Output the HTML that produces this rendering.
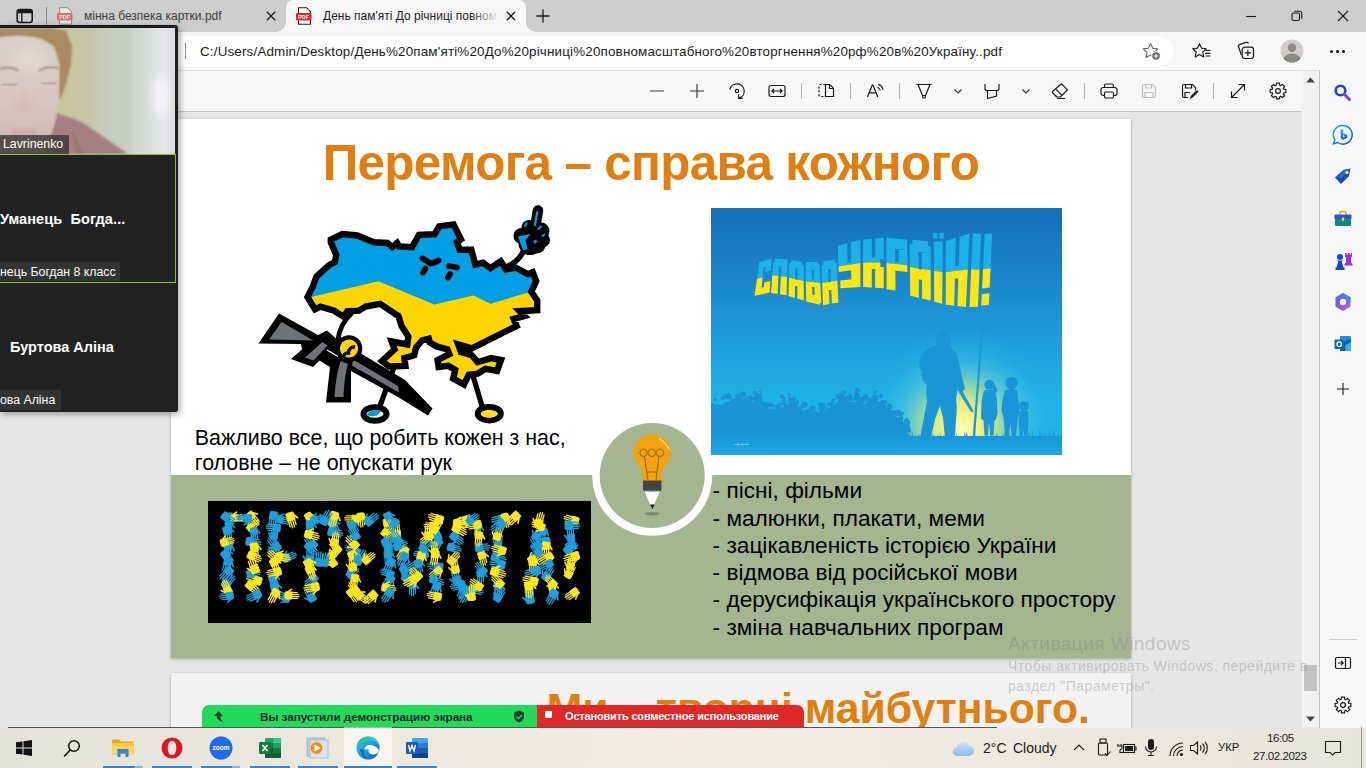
<!DOCTYPE html>
<html><head><meta charset="utf-8">
<style>
*{box-sizing:border-box;margin:0;padding:0}
html,body{width:1366px;height:768px;overflow:hidden;background:#e6e6e6;font-family:"Liberation Sans",sans-serif;}
.abs{position:absolute}
#tabbar{left:0;top:0;width:1366px;height:32px;background:#cdcdcd}
#tab2{left:286px;top:0;width:240px;height:32px;background:#f7f7f7;border-radius:7px 7px 0 0}
.tabtxt{font-size:12px;color:#3b3b3b;top:9px;white-space:nowrap}
#addr{left:0;top:32px;width:1366px;height:38px;background:#f7f7f7}
#pill{left:150px;top:36px;width:1024px;height:30px;background:#fff;border-radius:15px}
#url{left:200px;top:43.600px;font-size:13.4px;color:#1b1b1b;white-space:nowrap;letter-spacing:0.177px}
#ptool{left:0;top:70px;width:1319px;height:42px;background:#f7f7f7;border-bottom:1px solid #c4c4c4;border-top:1px solid #dcdcdc}
#side{left:1319px;top:70px;width:47px;height:658px;background:#f7f7f7;border-left:1px solid #c0c0c0}
#pdfbg{left:0;top:112px;width:1303px;height:615px;background:#e6e6e6}
#vscroll{left:1302px;top:71px;width:17px;height:656px;background:#f1f1f1}
#page{left:171px;top:119px;width:960px;height:539px;background:#fff;box-shadow:0 1px 3px rgba(0,0,0,.3)}
#band{left:171px;top:475px;width:960px;height:183px;background:#a5b592}
#page2{left:171px;top:673px;width:960px;height:60px;background:#f2f2f2;box-shadow:0 1px 3px rgba(0,0,0,.3)}
#title{left:171px;top:134.300px;width:960px;text-align:center;font-size:49.4px;letter-spacing:-0.68px;font-weight:bold;color:#e07f10;white-space:nowrap}
.st{font-size:21.4px;color:#000;white-space:nowrap;line-height:1}
.bl{font-size:22.65px;color:#000;white-space:nowrap;line-height:1}
#taskbar{left:0;top:728px;width:1366px;height:40px;border-top:0;background:linear-gradient(90deg,#e4e3da 0%,#ece9e0 30%,#f1ece1 55%,#ece9df 75%,#e6e5dc 100%)}
.wm{color:rgba(128,128,128,.36);white-space:nowrap;line-height:1;letter-spacing:.47px}
.tray{color:#1a1a1a;white-space:nowrap}
#page2title{left:546.800px;top:686.600px;line-height:1;font-size:42.7px;font-weight:bold;color:#e07f10;white-space:nowrap}
#zoom{left:0;top:25px;width:178px;height:387px;background:#222;border-radius:0 3px 3px 0;box-shadow:2px 2px 6px rgba(0,0,0,.35);border-top:3px solid #1a1a1a;border-right:2px solid #1e1e1e}
.zl{color:#fff;font-size:12.3px;white-space:nowrap}
.zn{color:#fff;font-size:14.500px;font-weight:bold;white-space:nowrap}
</style></head><body>
<div id="tabbar" class="abs"></div>
<div id="tab2" class="abs"></div>
<div class="abs" style="left:276px;top:22px;width:10px;height:10px;background:radial-gradient(circle at 0 0,#cdcdcd 9.5px,#f7f7f7 10px)"></div>
<div class="abs" style="left:526px;top:22px;width:10px;height:10px;background:radial-gradient(circle at 100% 0,#cdcdcd 9.5px,#f7f7f7 10px)"></div>
<!-- tab actions icon -->
<svg class="abs" style="left:16px;top:8px" width="18" height="16" viewBox="0 0 18 16"><rect x="1.2" y="1.5" width="15" height="13" rx="2.5" fill="none" stroke="#1a1a1a" stroke-width="1.6"/><path d="M1.2 5.2V4a2.5 2.5 0 0 1 2.5-2.5h10a2.5 2.5 0 0 1 2.500 2.500V5.200Z" fill="#1a1a1a"/><path d="M5.800 5v9.500" stroke="#1a1a1a" stroke-width="1.400"/></svg>
<div class="abs" style="left:46px;top:7px;width:1px;height:18px;background:#8a8a8a"></div>
<!-- pdf icon 1 (faded) -->
<svg class="abs" style="left:57px;top:7px;opacity:.55" width="17" height="18" viewBox="0 0 17 18"><path d="M2.500 .7h8l4 4v12.500h-12z" fill="#fff" stroke="#555" stroke-width="1"/><rect x="0" y="6" width="15.500" height="7.500" rx="1" fill="#e5252a"/><text x="7.700" y="12" font-size="5.500" font-weight="bold" fill="#fff" text-anchor="middle" font-family="Liberation Sans">PDF</text></svg>
<div class="abs tabtxt" style="left:84px">мінна безпека картки.pdf</div>
<svg class="abs" style="left:266px;top:11px" width="10" height="10" viewBox="0 0 10 10"><path d="M.8.800l8.400 8.400M9.200.800L.8 9.200" stroke="#1a1a1a" stroke-width="1.300"/></svg>
<!-- pdf icon 2 -->
<svg class="abs" style="left:296px;top:7px" width="17" height="18" viewBox="0 0 17 18"><path d="M2.500 .7h8l4 4v12.500h-12z" fill="#fff" stroke="#222" stroke-width="1.100"/><rect x="0" y="6" width="15.500" height="7.500" rx="1" fill="#e5252a"/><text x="7.700" y="12" font-size="5.500" font-weight="bold" fill="#fff" text-anchor="middle" font-family="Liberation Sans">PDF</text></svg>
<div class="abs tabtxt" id="t2txt" style="left:323px;color:#1b1b1b;width:176px;overflow:hidden">День пам'яті До річниці повном</div>
<div class="abs" style="left:470px;top:4px;width:29px;height:24px;background:linear-gradient(90deg,rgba(247,247,247,0),#f7f7f7)"></div>
<svg class="abs" style="left:506px;top:11px" width="10" height="10" viewBox="0 0 10 10"><path d="M.8.800l8.400 8.400M9.200.800L.8 9.200" stroke="#1a1a1a" stroke-width="1.300"/></svg>
<svg class="abs" style="left:536px;top:9px" width="14" height="14" viewBox="0 0 14 14"><path d="M7 .5v13M.5 7h13" stroke="#1a1a1a" stroke-width="1.300"/></svg>
<!-- window controls -->
<svg class="abs" style="left:1245px;top:11px" width="12" height="12" viewBox="0 0 12 12"><path d="M1 5.500h10" stroke="#1a1a1a" stroke-width="1.100"/></svg>
<svg class="abs" style="left:1291px;top:10px" width="12" height="12" viewBox="0 0 12 12"><rect x="1" y="3" width="7.500" height="7.500" rx="1.500" fill="none" stroke="#1a1a1a" stroke-width="1.100"/><path d="M3.200 1.200h5.300a2.300 2.300 0 0 1 2.300 2.300v5.300" fill="none" stroke="#1a1a1a" stroke-width="1.100"/></svg>
<svg class="abs" style="left:1337px;top:10px" width="12" height="12" viewBox="0 0 12 12"><path d="M1 1l10 10M11 1L1 11" stroke="#1a1a1a" stroke-width="1.100"/></svg>
<div id="addr" class="abs"></div>
<div id="pill" class="abs"></div>
<div class="abs" style="left:185px;top:43px;width:1px;height:16px;background:#8a8a8a"></div>
<div id="url" class="abs">C:/Users/Admin/Desktop/День%20пам'яті%20До%20річниці%20повномасштабного%20вторгнення%20рф%20в%20Україну..pdf</div>
<!-- star plus -->
<svg class="abs" style="left:1141px;top:41px" width="22" height="22" viewBox="0 0 22 22"><path d="M9.500 2.500l2.200 4.700 5 .7-3.700 3.500.9 5.100-4.400-2.500-4.500 2.500.9-5.100L2.200 7.900l5.100-.7z" fill="none" stroke="#666" stroke-width="1.100" stroke-linejoin="round"/><circle cx="15" cy="15" r="4.300" fill="#666" stroke="#fff" stroke-width="1"/><path d="M15 12.800v4.400M12.800 15h4.400" stroke="#fff" stroke-width="1.100"/></svg>
<!-- favorites -->
<svg class="abs" style="left:1191px;top:41px" width="22" height="22" viewBox="0 0 22 22"><path d="M8.500 2.700l2.100 4.500 4.600.6-3.400 3.300.9 4.900-4.200-2.400-4.300 2.400.9-4.900L1.700 7.800l4.700-.6z" fill="none" stroke="#1a1a1a" stroke-width="1.200" stroke-linejoin="round"/><path d="M14.500 9.500h5M14 12.300h5.500M14.500 15h5" stroke="#1a1a1a" stroke-width="1.200"/></svg>
<!-- collections -->
<svg class="abs" style="left:1235px;top:40px" width="22" height="22" viewBox="0 0 22 22"><path d="M6.500 15.200l-2.800-8a2.200 2.200 0 0 1 1.300-2.800l6-2a2.200 2.200 0 0 1 2.500 1" fill="none" stroke="#1a1a1a" stroke-width="1.200"/><rect x="7.200" y="7.200" width="11.300" height="11.300" rx="2.500" fill="#f7f7f7" stroke="#1a1a1a" stroke-width="1.200"/><path d="M12.850 9.800v6.100M9.800 12.850h6.100" stroke="#1a1a1a" stroke-width="1.200"/></svg>
<!-- avatar -->
<svg class="abs" style="left:1280px;top:39px" width="24" height="24" viewBox="0 0 24 24"><defs><clipPath id="avc"><circle cx="12" cy="12" r="11.500"/></clipPath></defs><circle cx="12" cy="12" r="11.500" fill="#d0cdcb"/><g clip-path="url(#avc)" fill="#8c8886"><circle cx="12" cy="8.700" r="4.200"/><ellipse cx="12" cy="20.500" rx="8.500" ry="6"/></g></svg>
<div class="abs" style="left:1330px;top:49.500px;width:3px;height:3px;border-radius:2px;background:#1a1a1a;box-shadow:6px 0 0 #1a1a1a,12px 0 0 #1a1a1a"></div>
<div id="ptool" class="abs"></div>
<svg class="abs" style="left:646.0px;top:80.0px" width="22" height="22" viewBox="0 0 22 22"><path d="M4 11h14" stroke="#555" stroke-width="1.1"/></svg>
<svg class="abs" style="left:686.0px;top:80.0px" width="22" height="22" viewBox="0 0 22 22"><path d="M4 11h14M11 4v14" stroke="#333" stroke-width="1.1"/></svg>
<svg class="abs" style="left:726.0px;top:80.0px" width="22" height="22" viewBox="0 0 22 22"><path d="M3.800 9.500a7.300 7.300 0 1 1 9.200 8.600" stroke="#1a1a1a" stroke-width="1.2" fill="none"/><path d="M12.700 14.300v4h4" stroke="#1a1a1a" stroke-width="1.2" fill="none"/><circle cx="11" cy="11" r="1.700" stroke="#1a1a1a" stroke-width="1.2" fill="none"/></svg>
<svg class="abs" style="left:766.0px;top:80.0px" width="22" height="22" viewBox="0 0 22 22"><rect x="3" y="5.500" width="16" height="11" rx="2" stroke="#1a1a1a" stroke-width="1.2" fill="none"/><path d="M6 11h10M8 9l-2 2 2 2M14 9l2 2-2 2" stroke="#1a1a1a" stroke-width="1.2" fill="none"/></svg>
<div class="abs" style="left:801px;top:83px;width:1px;height:16px;background:#b5b5b5"></div>
<svg class="abs" style="left:815.0px;top:80.0px" width="22" height="22" viewBox="0 0 22 22"><path d="M10.500 4.500h4.300l3.700 3.700v8.300h-8z" stroke="#1a1a1a" stroke-width="1.2" fill="none"/><path d="M14.500 4.700v3.800h3.800" stroke="#1a1a1a" stroke-width="1.2" fill="none"/><path d="M10.500 4.500H5.500a1.500 1.500 0 0 0-1.500 1.500v9a1.500 1.500 0 0 0 1.500 1.500h5" stroke="#1a1a1a" stroke-width="1.2" fill="none" stroke-dasharray="2.2 1.600"/></svg>
<div class="abs" style="left:850px;top:83px;width:1px;height:16px;background:#b5b5b5"></div>
<svg class="abs" style="left:864.0px;top:80.0px" width="22" height="22" viewBox="0 0 22 22"><path d="M3.500 17l4.700-12h.8l4.700 12M5.300 12.800h6.600" stroke="#1a1a1a" stroke-width="1.2" fill="none"/><path d="M13.500 7.200a4 4 0 0 1 2.800 3.300M14.200 4.300a6.800 6.800 0 0 1 4.800 5.500" stroke="#1a1a1a" stroke-width="1.2" fill="none"/></svg>
<div class="abs" style="left:899px;top:83px;width:1px;height:16px;background:#b5b5b5"></div>
<svg class="abs" style="left:913.0px;top:80.0px" width="22" height="22" viewBox="0 0 22 22"><path d="M3.500 4.500h15M5 4.500l4.500 11h3l4.500-11M9.500 15.500l.5 2.500h2l.5-2.500" stroke="#1a1a1a" stroke-width="1.2" fill="none"/></svg>
<svg class="abs" style="left:947.0px;top:80.0px" width="22" height="22" viewBox="0 0 22 22"><path d="M7.500 9.500l3.500 3.500 3.500-3.500" stroke="#333" stroke-width="1.100" fill="none"/></svg>
<svg class="abs" style="left:981.0px;top:80.0px" width="22" height="22" viewBox="0 0 22 22"><path d="M4 4v4.500a2 2 0 0 0 2 2h10a2 2 0 0 0 2-2V4M6.500 10.500v8l9-2.500v-5.500" stroke="#1a1a1a" stroke-width="1.2" fill="none"/></svg>
<svg class="abs" style="left:1015.0px;top:80.0px" width="22" height="22" viewBox="0 0 22 22"><path d="M7.500 9.500l3.500 3.500 3.500-3.500" stroke="#333" stroke-width="1.100" fill="none"/></svg>
<svg class="abs" style="left:1049.0px;top:80.0px" width="22" height="22" viewBox="0 0 22 22"><path d="M12.500 3.800l6 6-7.200 7.200h-3.500l-4-4a1.300 1.300 0 0 1 0-1.800z" stroke="#1a1a1a" stroke-width="1.2" fill="none" stroke-linejoin="round"/><path d="M7 9.300l6 6M8 18.500h8" stroke="#1a1a1a" stroke-width="1.2" fill="none"/></svg>
<div class="abs" style="left:1084px;top:83px;width:1px;height:16px;background:#b5b5b5"></div>
<svg class="abs" style="left:1098.0px;top:80.0px" width="22" height="22" viewBox="0 0 22 22"><path d="M6.500 7.500V5.500a1.500 1.500 0 0 1 1.500-1.500h6a1.500 1.500 0 0 1 1.500 1.500v2" stroke="#1a1a1a" stroke-width="1.2" fill="none"/><rect x="3" y="7.500" width="16" height="8" rx="2.200" stroke="#1a1a1a" stroke-width="1.2" fill="none"/><rect x="6.500" y="12" width="9" height="6" rx="1.200" fill="#f7f7f7" stroke="#1a1a1a" stroke-width="1.200"/></svg>
<svg class="abs" style="left:1138.0px;top:80.0px" width="22" height="22" viewBox="0 0 22 22"><path d="M4.500 6a1.500 1.500 0 0 1 1.500-1.500h8.500l3 3v8.500a1.500 1.500 0 0 1-1.500 1.500h-10a1.500 1.500 0 0 1-1.500-1.500z" stroke="#bdbdbd" stroke-width="1.200" fill="none"/><path d="M7.500 4.500v3.500h6v-3.500M7 17.500v-5h8v5" stroke="#bdbdbd" stroke-width="1.200" fill="none"/></svg>
<svg class="abs" style="left:1178.0px;top:80.0px" width="22" height="22" viewBox="0 0 22 22"><path d="M10 17.500H6a1.500 1.500 0 0 1-1.500-1.500V6a1.500 1.500 0 0 1 1.500-1.500h8.500l3 3v3" stroke="#1a1a1a" stroke-width="1.2" fill="none"/><path d="M7.500 4.500v3.500h6v-3.500M7 17.500v-5h5" stroke="#1a1a1a" stroke-width="1.2" fill="none"/><path d="M11.500 19.500l1-3.500 5.500-5.500a1.400 1.400 0 0 1 2 2l-5.500 5.500z" fill="#1a1a1a" stroke="#f7f7f7" stroke-width=".6"/></svg>
<div class="abs" style="left:1213px;top:83px;width:1px;height:16px;background:#b5b5b5"></div>
<svg class="abs" style="left:1227.0px;top:80.0px" width="22" height="22" viewBox="0 0 22 22"><path d="M4.500 17.500l13-13M11.500 4.500h6v6M4.500 11.500v6h6" stroke="#1a1a1a" stroke-width="1.2" fill="none"/></svg>
<svg class="abs" style="left:1267.0px;top:80.0px" width="22" height="22" viewBox="0 0 22 22"><g transform="translate(11 11)"><circle r="2.400" stroke="#1a1a1a" stroke-width="1.2" fill="none"/><path d="M7.85 -1.53L7.85 1.53L5.74 1.75L5.30 2.82L6.63 4.47L4.47 6.63L2.82 5.30L1.75 5.74L1.53 7.85L-1.53 7.85L-1.75 5.74L-2.82 5.30L-4.47 6.63L-6.63 4.47L-5.30 2.82L-5.74 1.75L-7.85 1.53L-7.85 -1.53L-5.74 -1.75L-5.30 -2.82L-6.63 -4.47L-4.47 -6.63L-2.82 -5.30L-1.75 -5.74L-1.53 -7.85L1.53 -7.85L1.75 -5.74L2.82 -5.30L4.47 -6.63L6.63 -4.47L5.30 -2.82L5.74 -1.75Z" stroke="#1a1a1a" stroke-width="1.2" fill="none" stroke-linejoin="round"/></g></svg>
<div id="pdfbg" class="abs"></div>
<div id="vscroll" class="abs"></div>
<div class="abs" style="left:1304px;top:665px;width:13px;height:26px;background:#c1c1c1"></div>
<svg class="abs" style="left:1306px;top:77px" width="9" height="6"><path d="M0 5.500L4.500 .5 9 5.500z" fill="#444"/></svg>
<svg class="abs" style="left:1306px;top:716px" width="9" height="6"><path d="M0 .5L4.500 5.500 9 .5z" fill="#444"/></svg>
<div id="side" class="abs"></div>
<svg class="abs" style="left:1332.0px;top:82.0px" width="22" height="22" viewBox="0 0 22 22"><circle cx="8.500" cy="8.500" r="4.800" fill="none" stroke="#1a47c8" stroke-width="2.600"/><path d="M12.300 12.300l5.200 5.200" stroke="#7a3fe0" stroke-width="3" stroke-linecap="round"/></svg>
<svg class="abs" style="left:1332.0px;top:124.0px" width="22" height="22" viewBox="0 0 22 22"><defs><linearGradient id="bg1" x1="0" y1="0" x2="1" y2="1"><stop offset="0" stop-color="#2aa8f5"/><stop offset="1" stop-color="#1b4fd8"/></linearGradient></defs><path d="M11 1.500a9.300 9.300 0 1 1-5.300 17l-4.200 1.300 1.300-4A9.300 9.300 0 0 1 11 1.500z" fill="#e8f4ff" stroke="url(#bg1)" stroke-width="1.500"/><path d="M8.700 5v9.500l2.500 1.500 4-2.300v-2.700l-4.300-1.600 1 2.300 1.200.6-2 1.200V6z" fill="url(#bg1)"/></svg>
<svg class="abs" style="left:1332.0px;top:166.0px" width="22" height="22" viewBox="0 0 22 22"><path d="M3 11.500L11.500 4l7-1.500L17 10l-8 8z" fill="#1546c5"/><path d="M3 11.500L11.500 4l7-1.500-9 10z" fill="#2a63e6"/><circle cx="15" cy="6.500" r="1.800" fill="#ffd84a"/></svg>
<svg class="abs" style="left:1332.0px;top:208.0px" width="22" height="22" viewBox="0 0 22 22"><path d="M8 6.500V5a1.500 1.500 0 0 1 1.500-1.500h3A1.500 1.500 0 0 1 14 5v1.500" fill="none" stroke="#f0a500" stroke-width="1.600"/><rect x="2.500" y="6.500" width="17" height="5" rx="1" fill="#2a55d8"/><rect x="3" y="11" width="16" height="7" rx="1" fill="#0f8a7a"/><rect x="9.800" y="9.500" width="2.400" height="3.400" rx=".8" fill="#ffc93a"/></svg>
<svg class="abs" style="left:1332.0px;top:250.0px" width="22" height="22" viewBox="0 0 22 22"><path d="M13 3h1.500v1.500H16V3h1.500v1.500H19V3h1v3.500l-1 1v5l1.500 1.500v1.500h-8V14l1.500-1.500v-5l-1-1z" fill="#a02be0"/><circle cx="8" cy="7" r="3" fill="#1645c8"/><path d="M5 10.500h6l-1.200 1.500 1.700 5.500h1v2.500h-9V17.500h1l1.700-5.500z" fill="#1645c8"/></svg>
<svg class="abs" style="left:1332.0px;top:291.0px" width="22" height="22" viewBox="0 0 22 22"><defs><linearGradient id="m1" x1="0" y1="0" x2="1" y2="1"><stop offset="0" stop-color="#4a6cf0"/><stop offset=".6" stop-color="#8a5be0"/><stop offset="1" stop-color="#d070d8"/></linearGradient></defs><path d="M11 2l7.500 4.300v9.400L11 20l-7.500-4.300V6.300z" fill="url(#m1)"/><path d="M11 2l7.500 4.300V11L11 7z" fill="#3b8be8" opacity=".8"/><circle cx="11" cy="11" r="3.200" fill="#f7f7f7"/></svg>
<svg class="abs" style="left:1332.0px;top:333.0px" width="22" height="22" viewBox="0 0 22 22"><rect x="8" y="3" width="11" height="14" rx="1" fill="#1a8fe0"/><path d="M8 10l11-4v11a1 1 0 0 1-1 1H9a1 1 0 0 1-1-1z" fill="#0d5fb5"/><path d="M13.500 12l5.500-3v8a1 1 0 0 1-1 1h-4.500z" fill="#35b0f0"/><rect x="2.500" y="6.500" width="9.500" height="9.500" rx="1" fill="#0a64c0"/><circle cx="7.250" cy="11.250" r="2.300" fill="none" stroke="#fff" stroke-width="1.300"/></svg>
<svg class="abs" style="left:1332.0px;top:378.0px" width="22" height="22" viewBox="0 0 22 22"><path d="M11 5v12M5 11h12" stroke="#1a1a1a" stroke-width="1.100"/></svg>
<div class="abs" style="left:1329px;top:639px;width:28px;height:1px;background:#c8c8c8"></div>
<svg class="abs" style="left:1332.0px;top:652.0px" width="22" height="22" viewBox="0 0 22 22"><rect x="3.500" y="5.500" width="15" height="11" rx="1.500" stroke="#1a1a1a" stroke-width="1.2" fill="none"/><path d="M13.500 5.500v11M6 11h5M9 8.800l2.200 2.200-2.200 2.200" stroke="#1a1a1a" stroke-width="1.2" fill="none"/></svg>
<svg class="abs" style="left:1332.0px;top:694.0px" width="22" height="22" viewBox="0 0 22 22"><g transform="translate(11 11)"><circle r="2.400" stroke="#1a1a1a" stroke-width="1.2" fill="none"/><path d="M7.85 -1.53L7.85 1.53L5.74 1.75L5.30 2.82L6.63 4.47L4.47 6.63L2.82 5.30L1.75 5.74L1.53 7.85L-1.53 7.85L-1.75 5.74L-2.82 5.30L-4.47 6.63L-6.63 4.47L-5.30 2.82L-5.74 1.75L-7.85 1.53L-7.85 -1.53L-5.74 -1.75L-5.30 -2.82L-6.63 -4.47L-4.47 -6.63L-2.82 -5.30L-1.75 -5.74L-1.53 -7.85L1.53 -7.85L1.75 -5.74L2.82 -5.30L4.47 -6.63L6.63 -4.47L5.30 -2.82L5.74 -1.75Z" stroke="#1a1a1a" stroke-width="1.2" fill="none" stroke-linejoin="round"/></g></svg>
<div id="page" class="abs"></div>
<div id="band" class="abs"></div>
<div id="page2" class="abs"></div>
<div id="title" class="abs">Перемога – справа кожного</div>
<!--MAPCHAR--><svg class="abs" style="left:250px;top:195px" width="320" height="240" viewBox="250 195 320 240">
<defs><clipPath id="mapclip"><path id="mapshape" d="M330.800 239.600L342.400 234.100 357.400 235.500 373.800 242.300 387.500 243 392.300 247.100 397.100 243 399.100 246.400 412.100 247.100 419 234.800 434.700 234.100 439.100 226.400 453.500 224.400 461 239.400 456.900 242.200 459.700 249.700 471.300 249.700 475.400 264.700 482.900 262.700 490.400 268.100 500.700 261.300 506.100 269.500 515.700 267.500 528 274.300 532.800 272.300 536.200 281.100 531.300 291.700 537.200 300.500 537.200 310.300 519.600 311.200 524.500 316.100 513.700 319 516.700 325.900 471.800 348.300 458.100 344.400 461 352.200 471.800 355.200 477.600 362 491.300 358.100 501 360 497.100 370.800 485.400 368.800 477.600 373.700 468.800 374.700 464 384.500 453.200 378.600 455.200 369.800 448.300 365.900 438.600 366.900 437.600 360 449.300 354.200 447.400 349.300 436.600 346.400 429.800 342.500 428.800 338.600 422 340.500 416.100 347.400 414.200 355.200 404.400 358.100 405.400 365.900 389 366.500 382 361 394.600 349.300 391.700 341.500 407.300 344.400 408.300 336.600 401.500 325.900 398.500 316.100 380 303.900 365.600 306.600 358.800 310.700 347.200 311.400 343.800 316.900 334.200 310.700 320.500 306.600 315 309.300 307.500 297 313 286.100 316.400 276.500 329.400 264.900 334.900 262.200 336.200 254.600 330.800 242.300Z"/></clipPath></defs>
<!-- right arm + hand -->
<path d="M506 267C514 264 520 259 524 250" fill="none" stroke="#000" stroke-width="5.500"/>
<g>
<path d="M538 210.500L534.500 230" stroke="#000" stroke-width="10.500" stroke-linecap="round"/>
<circle cx="521.500" cy="236" r="8"/><circle cx="529" cy="227.500" r="7.500"/><circle cx="541" cy="231" r="8.500"/><circle cx="542.500" cy="240" r="7.500"/><circle cx="530" cy="243.500" r="11.500"/><circle cx="537" cy="245" r="8.500"/>
<path d="M537.300 212l-2.300 13" stroke="#009fe3" stroke-width="2.200" stroke-linecap="round"/>
<path d="M518 236.500l12.500-2.500-5 6 2 9.500-4.500.5z" fill="#009fe3"/>
<path d="M533 241.500l2.500-2 2 2-2.500 2.500z" fill="#009fe3"/>
<path d="M525 226l1.500-3M538.500 229l2.500-2.500M542.500 236l2-1.500" stroke="#009fe3" stroke-width="2" stroke-linecap="round"/>
</g>
<!-- legs -->
<path d="M394.500 366L380 406" stroke="#000" stroke-width="5.200"/>
<path d="M472.500 374L482 406" stroke="#000" stroke-width="5.200"/>
<ellipse cx="375" cy="414" rx="11.500" ry="6.800" fill="#fff" stroke="#000" stroke-width="6"/>
<path d="M366.500 415c2-4.500 8-5.500 14-4.500-1 5-8 7.500-14 4.500z" fill="#009fe3"/>
<ellipse cx="489.300" cy="413.700" rx="11.500" ry="6.800" fill="#fff" stroke="#000" stroke-width="6"/>
<ellipse cx="488.800" cy="413.900" rx="8" ry="3.600" fill="#ffdf10"/>
<!-- map -->
<use href="#mapshape" fill="#ffd500"/>
<path clip-path="url(#mapclip)" d="M300 200H560V284L540 289 490.600 303.800 473.400 295.600 434.400 304.400 378.300 281.200 305 298.500 300 300Z" fill="#009fe3"/>
<use href="#mapshape" fill="none" stroke="#000" stroke-width="6.400" stroke-linejoin="miter"/>
<path d="M456 343l17 5-1 8-13-4z" fill="#000"/>
<!-- face -->
<path d="M422.500 258.500c3 1 6 4 8 5 3 0 6-2 8-3M425.500 268.500l-2.500 4" stroke="#000" stroke-width="5.800" stroke-linecap="round" fill="none"/>
<path d="M449 266l8 1.500M450 274l-2 3.500" stroke="#000" stroke-width="5.800" stroke-linecap="round" fill="none"/>
<!-- left arm -->
<path d="M352 313C343 321 339 330 338 340" fill="none" stroke="#000" stroke-width="4.800"/>
<!-- gun -->
<path d="M258.500 343.500L279 313.500 318 335 327 330.500 336 338.500 405 380 432.500 408.500 428 415.500 398 397 351 371 351 402.500 326 402.500 330 367 319.500 360.500 313 367 291 359 302 349.500 301 344Z" fill="#000"/>
<path d="M269 339.500l12.500-17.500 32 18.500z" fill="#6f7378"/>
<path d="M305 357.500l17.500-15.500 5 3.500-14 15z" fill="#6f7378"/>
<path d="M340.500 361c-3.500 12-5.500 24-6 36h9c.5-12 1.500-23 4.500-33z" fill="#6f7378"/>
<path d="M353 359.500l45 26.500 1 6.500-47-27z" fill="#6f7378"/>
<path d="M327 350l11 6.500" stroke="#fff" stroke-width="1.200"/>
<!-- left hand -->
<circle cx="349" cy="348.500" r="11.200" fill="#ffd500" stroke="#000" stroke-width="4.200"/>
<path d="M343 358.500c.5-4 2.500-6 5.500-5.500 0-4 3-6.500 6.500-6" fill="none" stroke="#000" stroke-width="3.400"/>
</svg>
<!--/MAPCHAR-->
<!--POSTER--><svg class="abs" style="left:711px;top:208px" width="351" height="247" viewBox="711 208 351 247">
<defs>
<linearGradient id="sky" x1="0" y1="208" x2="0" y2="455" gradientUnits="userSpaceOnUse"><stop offset="0" stop-color="#156fba"/><stop offset=".25" stop-color="#1a82c9"/><stop offset=".5" stop-color="#1e99da"/><stop offset=".78" stop-color="#1fb2e8"/><stop offset="1" stop-color="#1eb0e6"/></linearGradient>
<radialGradient id="sun" cx="962" cy="428" r="100" gradientUnits="userSpaceOnUse"><stop offset="0" stop-color="#fffcc4"/><stop offset=".12" stop-color="#fbf48a"/><stop offset=".26" stop-color="#eaee78" stop-opacity=".95"/><stop offset=".42" stop-color="#aee09a" stop-opacity=".8"/><stop offset=".6" stop-color="#62ccd2" stop-opacity=".55"/><stop offset=".82" stop-color="#2cb8e6" stop-opacity=".25"/><stop offset="1" stop-color="#1fb2e8" stop-opacity="0"/></radialGradient>
<linearGradient id="flagg" x1="0" y1="-71.6" x2="0" y2="0" gradientUnits="userSpaceOnUse"><stop offset=".49" stop-color="#1db0ea"/><stop offset=".49" stop-color="#ffe512"/></linearGradient>
<linearGradient id="grd" x1="0" y1="436" x2="0" y2="455" gradientUnits="userSpaceOnUse"><stop offset="0" stop-color="#1a96d8"/><stop offset=".5" stop-color="#1a9fdd"/><stop offset="1" stop-color="#1ba6e1"/></linearGradient><clipPath id="pc"><rect x="711" y="208" width="351" height="247"/></clipPath>
</defs>
<g clip-path="url(#pc)">
<rect x="711" y="208" width="351" height="247" fill="url(#sky)"/>
<circle cx="962" cy="428" r="100" fill="url(#sun)"/>
<g fill="#1a93d6"><path d="M711.0 456.0 711.0 404.9 714.0 406.7 717.0 406.2 720.0 405.4 723.0 404.2 726.0 402.8 729.0 401.4 732.0 400.0 735.0 399.0 738.0 398.3 741.0 398.1 744.0 398.4 747.0 399.2 750.0 400.4 753.0 401.9 756.0 403.5 759.0 405.1 762.0 406.5 765.0 407.6 768.0 408.3 771.0 408.6 774.0 408.6 777.0 408.3 780.0 407.8 783.0 407.4 786.0 407.1 789.0 407.0 792.0 407.3 795.0 407.8 798.0 408.7 801.0 409.8 804.0 410.9 807.0 411.9 810.0 412.8 813.0 413.2 816.0 413.1 819.0 412.6 822.0 411.6 825.0 410.2 828.0 408.5 831.0 406.7 834.0 405.0 837.0 403.5 840.0 402.3 843.0 401.5 846.0 401.2 849.0 401.3 852.0 401.7 855.0 402.3 858.0 403.0 861.0 403.6 864.0 404.0 867.0 404.0 870.0 403.8 873.0 403.3 876.0 402.5 879.0 401.7 882.0 402.8 885.0 404.9 888.0 407.4 891.0 410.3 894.0 413.7 897.0 417.5 900.0 421.7 903.0 426.1 906.0 430.7 909.0 435.1 912.0 439.3 912.0 456.0Z"/><circle cx="710.8" cy="405.0" r="2.6"/><circle cx="712.8" cy="406.3" r="2.8"/><circle cx="715.3" cy="399.6" r="1.7"/><circle cx="717.9" cy="405.3" r="1.3"/><circle cx="719.9" cy="406.4" r="1.3"/><circle cx="723.2" cy="397.4" r="2.4"/><circle cx="725.7" cy="403.6" r="1.4"/><circle cx="727.5" cy="396.1" r="2.8"/><circle cx="729.9" cy="396.7" r="2.3"/><circle cx="731.7" cy="400.1" r="1.3"/><circle cx="734.8" cy="399.8" r="1.6"/><circle cx="737.8" cy="395.9" r="2.7"/><circle cx="739.6" cy="397.7" r="2.2"/><circle cx="742.9" cy="394.5" r="3.0"/><circle cx="745.3" cy="399.6" r="2.0"/><circle cx="746.9" cy="397.9" r="1.4"/><circle cx="749.4" cy="397.5" r="2.2"/><circle cx="751.3" cy="398.5" r="2.4"/><circle cx="753.2" cy="397.8" r="1.5"/><path d="M753.4 402.6L756.6 392.2L757.9 402.6z"/><circle cx="757.0" cy="395.6" r="1.8"/><circle cx="756.4" cy="393.3" r="2.1"/><circle cx="754.8" cy="392.9" r="2.2"/><circle cx="755.4" cy="398.6" r="2.4"/><circle cx="758.0" cy="401.5" r="3.0"/><path d="M758.0 403.9L761.1 388.3L762.5 403.9z"/><circle cx="759.9" cy="390.8" r="1.1"/><circle cx="758.6" cy="395.2" r="1.5"/><circle cx="758.1" cy="397.0" r="1.4"/><circle cx="760.0" cy="399.9" r="3.0"/><circle cx="763.3" cy="406.0" r="3.2"/><circle cx="765.3" cy="404.9" r="3.1"/><circle cx="766.9" cy="407.8" r="1.6"/><circle cx="770.1" cy="405.0" r="2.4"/><circle cx="773.3" cy="405.9" r="1.8"/><circle cx="776.4" cy="406.8" r="1.2"/><circle cx="777.9" cy="406.3" r="2.4"/><circle cx="780.6" cy="404.0" r="1.7"/><path d="M781.9 405.0L783.7 394.8L786.4 405.0z"/><circle cx="781.8" cy="396.0" r="1.8"/><circle cx="781.7" cy="397.4" r="1.4"/><circle cx="783.9" cy="398.8" r="1.2"/><circle cx="783.9" cy="401.0" r="1.5"/><circle cx="785.8" cy="405.8" r="2.0"/><circle cx="787.4" cy="407.0" r="2.6"/><path d="M788.5 407.8L789.2 392.4L793.0 407.8z"/><circle cx="791.7" cy="399.5" r="1.8"/><circle cx="789.3" cy="401.2" r="1.5"/><circle cx="789.3" cy="394.4" r="1.4"/><circle cx="790.5" cy="403.8" r="1.2"/><path d="M791.0 412.0L793.0 397.8L795.5 412.0z"/><circle cx="794.4" cy="399.0" r="1.4"/><circle cx="794.2" cy="402.2" r="1.7"/><circle cx="790.3" cy="400.1" r="2.2"/><circle cx="793.0" cy="408.0" r="2.3"/><path d="M793.2 412.8L793.5 402.3L797.7 412.8z"/><circle cx="797.1" cy="404.0" r="1.5"/><circle cx="795.9" cy="407.4" r="1.8"/><circle cx="794.8" cy="405.1" r="1.5"/><circle cx="795.2" cy="408.8" r="1.8"/><circle cx="797.5" cy="401.9" r="1.7"/><circle cx="799.5" cy="408.8" r="2.6"/><circle cx="801.9" cy="406.2" r="1.7"/><circle cx="804.6" cy="404.8" r="3.1"/><circle cx="807.1" cy="412.1" r="2.6"/><circle cx="809.9" cy="411.1" r="2.7"/><circle cx="812.8" cy="408.1" r="2.6"/><circle cx="815.0" cy="412.8" r="2.4"/><circle cx="818.5" cy="408.2" r="1.2"/><path d="M818.8 413.5L822.6 401.4L823.3 413.5z"/><circle cx="822.3" cy="405.2" r="1.1"/><circle cx="823.5" cy="403.9" r="1.2"/><circle cx="819.8" cy="404.2" r="1.8"/><circle cx="820.8" cy="409.5" r="1.5"/><circle cx="822.8" cy="406.8" r="3.1"/><circle cx="826.0" cy="408.1" r="1.5"/><circle cx="828.7" cy="404.1" r="1.8"/><circle cx="831.2" cy="404.6" r="2.1"/><circle cx="833.0" cy="400.7" r="2.0"/><circle cx="836.4" cy="403.2" r="1.3"/><path d="M837.3 403.5L840.1 389.3L841.8 403.5z"/><circle cx="837.8" cy="397.4" r="1.7"/><circle cx="836.9" cy="395.3" r="1.5"/><circle cx="841.7" cy="394.8" r="1.2"/><circle cx="839.3" cy="399.5" r="1.2"/><path d="M840.4 402.9L842.0 391.6L844.9 402.9z"/><circle cx="842.7" cy="396.3" r="2.0"/><circle cx="844.5" cy="392.7" r="2.1"/><circle cx="839.5" cy="394.4" r="1.1"/><circle cx="842.4" cy="398.9" r="2.8"/><circle cx="845.7" cy="400.3" r="2.7"/><circle cx="847.3" cy="399.1" r="2.8"/><circle cx="849.8" cy="397.1" r="2.8"/><circle cx="852.0" cy="399.7" r="1.8"/><circle cx="853.6" cy="399.1" r="1.3"/><path d="M853.5 399.9L856.2 386.5L858.0 399.9z"/><circle cx="856.4" cy="393.0" r="1.1"/><circle cx="858.1" cy="390.5" r="1.5"/><circle cx="856.6" cy="389.2" r="1.6"/><circle cx="855.5" cy="395.9" r="1.7"/><path d="M855.2 401.5L857.3 389.1L859.7 401.5z"/><circle cx="857.9" cy="394.8" r="1.9"/><circle cx="857.1" cy="394.9" r="2.0"/><circle cx="859.0" cy="390.5" r="1.8"/><circle cx="857.2" cy="397.5" r="2.9"/><circle cx="859.1" cy="403.5" r="2.8"/><circle cx="862.4" cy="399.9" r="3.1"/><circle cx="865.8" cy="397.1" r="2.8"/><circle cx="868.5" cy="403.0" r="2.4"/><circle cx="870.3" cy="401.0" r="3.1"/><circle cx="872.3" cy="400.9" r="3.2"/><path d="M873.2 402.6L873.9 389.8L877.7 402.6z"/><circle cx="875.5" cy="391.8" r="1.4"/><circle cx="873.0" cy="396.7" r="1.5"/><circle cx="875.7" cy="396.7" r="1.8"/><circle cx="875.2" cy="398.6" r="3.0"/><circle cx="877.2" cy="402.7" r="1.4"/><circle cx="880.4" cy="395.7" r="2.2"/><circle cx="882.8" cy="402.5" r="2.5"/><circle cx="885.6" cy="401.8" r="1.7"/><circle cx="888.1" cy="404.8" r="1.7"/><circle cx="889.6" cy="406.6" r="2.8"/><circle cx="892.6" cy="413.0" r="2.7"/><circle cx="894.9" cy="413.1" r="1.2"/><circle cx="897.6" cy="412.8" r="3.2"/><path d="M898.5 423.3L901.8 410.7L903.0 423.3z"/><circle cx="900.5" cy="414.8" r="1.5"/><circle cx="901.3" cy="414.0" r="1.8"/><circle cx="902.7" cy="413.1" r="1.4"/><circle cx="900.5" cy="419.3" r="2.8"/><circle cx="902.5" cy="424.8" r="2.8"/><path d="M902.4 432.4L905.0 420.2L906.9 432.4z"/><circle cx="902.3" cy="422.0" r="1.3"/><circle cx="905.5" cy="425.1" r="1.3"/><circle cx="902.7" cy="423.9" r="1.9"/><circle cx="904.4" cy="428.4" r="2.9"/><circle cx="906.4" cy="426.9" r="2.6"/><path d="M906.6 432.6L908.2 417.8L911.1 432.6z"/><circle cx="906.3" cy="419.8" r="1.8"/><circle cx="905.7" cy="420.9" r="1.7"/><circle cx="908.3" cy="422.7" r="2.2"/><circle cx="908.6" cy="428.6" r="1.6"/></g>
<!-- pole -->
<path d="M983 308L972.600 438h2.400L984.500 308z" fill="#1a96d8"/>
<!-- soldier -->
<g fill="#1a96d8">
<ellipse cx="943.400" cy="338.800" rx="8" ry="7.600"/>
<path d="M937 345c3 1 9 1 13 0l3 5c4 4 6 10 7 17l3 14 2 8-3 3-4-5-2 12c1 8 1 14 0 20l-1 19h-10l-2-20-3-12-5 13-4 19h-11l4-21 3-16c-1-6-1-11 0-16-4-3-6-8-5-14-3-3-3-8-2-12 2-7 7-11 17-14z"/>
<path d="M957 389l3-2 12 21 1.500 3.500-2 .8-2.500-3.500z"/>
</g>
<!-- children -->
<g fill="#1a96d8">
<circle cx="989.400" cy="384.800" r="5"/><path d="M994 384l3.500 5.500-1.500 4-3.500-5z"/>
<path d="M984 390.500c3-1.500 8-1.500 11 0l2 9 .5 14-1.500 6-1.500 1-1 15h-3.500l-1-13-1 13h-3.500l-1-15-2.500-2 .5-17z"/>
<circle cx="1011.500" cy="383" r="6.200"/>
<path d="M1005 390c4-1.500 9-1.500 12 0l1.500 10 1 12-2 8-1.500 16h-4.500l-1-14-1.500 14h-4l-1.500-18-2-8 1-10z"/>
<circle cx="1024" cy="406" r="5"/>
<path d="M1019.500 411.500c3-1 6-1 8.500 0l.5 10-1 14h-3.500l-.5-9-.5 9h-3l-1.500-14z"/>
</g>
<rect x="711" y="436" width="351" height="19" fill="url(#grd)"/>
<path d="M713.4 438l0.9 -6.5l1.3 6.5zM716.5 438l1.3 -6.4l1.3 6.4zM717.8 438l1.3 -4.8l1.3 4.8zM720.3 438l-1.2 -7.4l1.3 7.4zM722.4 438l0.1 -3.5l1.3 3.5zM724.8 438l-0.8 -2.1l1.3 2.1zM726.5 438l0.8 -7.5l1.3 7.5zM728.1 438l-1.1 -6.8l1.3 6.8zM730.5 438l-1.5 -2.8l1.3 2.8zM733.4 438l-0.9 -3.3l1.3 3.3zM736.6 438l-0.6 -7.2l1.3 7.2zM739.7 438l0.5 -5.2l1.3 5.2zM741.3 438l0.6 -7.6l1.3 7.6zM744.5 438l-0.6 -7.4l1.3 7.4zM746.4 438l-1.1 -3.0l1.3 3.0zM747.7 438l0.3 -3.8l1.3 3.8zM748.9 438l-0.5 -6.1l1.3 6.1zM750.7 438l-0.1 -6.9l1.3 6.9zM752.6 438l0.6 -4.9l1.3 4.9zM753.9 438l-1.4 -7.9l1.3 7.9zM756.6 438l-1.4 -7.1l1.3 7.1zM759.4 438l0.2 -4.2l1.3 4.2zM760.6 438l-1.0 -2.3l1.3 2.3zM763.7 438l0.8 -3.2l1.3 3.2zM766.7 438l-0.5 -7.7l1.3 7.7zM768.7 438l0.8 -5.1l1.3 5.1zM770.1 438l0.9 -6.5l1.3 6.5zM773.0 438l1.3 -2.2l1.3 2.2zM774.4 438l0.3 -4.0l1.3 4.0zM777.4 438l1.3 -4.0l1.3 4.0zM779.7 438l-0.5 -3.9l1.3 3.9zM781.3 438l-1.1 -2.5l1.3 2.5zM783.8 438l-1.0 -8.0l1.3 8.0zM785.1 438l0.1 -7.9l1.3 7.9zM787.1 438l0.3 -3.4l1.3 3.4zM790.0 438l-0.2 -4.7l1.3 4.7zM791.3 438l-1.4 -7.5l1.3 7.5zM793.5 438l-1.1 -7.0l1.3 7.0zM796.2 438l0.4 -7.7l1.3 7.7zM798.9 438l-0.2 -2.6l1.3 2.6zM800.4 438l-0.6 -7.1l1.3 7.1zM802.5 438l1.1 -8.0l1.3 8.0zM805.7 438l-0.0 -4.7l1.3 4.7zM808.3 438l-0.6 -4.9l1.3 4.9zM810.4 438l-0.4 -2.9l1.3 2.9zM813.5 438l0.4 -7.8l1.3 7.8zM815.7 438l-1.2 -4.0l1.3 4.0zM817.5 438l1.1 -6.7l1.3 6.7zM819.4 438l0.8 -6.7l1.3 6.7zM822.0 438l0.8 -6.0l1.3 6.0zM823.9 438l-0.7 -6.2l1.3 6.2zM826.1 438l0.6 -6.6l1.3 6.6zM827.9 438l0.4 -7.7l1.3 7.7zM830.2 438l0.1 -2.1l1.3 2.1zM831.9 438l-0.1 -6.0l1.3 6.0zM834.8 438l0.9 -5.9l1.3 5.9zM836.7 438l0.7 -5.9l1.3 5.9zM839.5 438l1.0 -4.1l1.3 4.1zM842.5 438l1.4 -6.1l1.3 6.1zM845.6 438l0.1 -5.1l1.3 5.1zM847.1 438l1.3 -7.0l1.3 7.0zM849.3 438l0.7 -6.1l1.3 6.1zM851.9 438l0.8 -3.0l1.3 3.0zM854.3 438l-0.2 -6.0l1.3 6.0zM856.7 438l0.4 -6.6l1.3 6.6zM859.4 438l-1.0 -2.2l1.3 2.2zM861.5 438l-0.8 -5.9l1.3 5.9zM864.0 438l-1.4 -5.8l1.3 5.8zM866.2 438l-1.3 -3.4l1.3 3.4zM867.6 438l-1.0 -3.9l1.3 3.9zM869.2 438l-0.1 -2.2l1.3 2.2zM871.2 438l0.3 -5.7l1.3 5.7zM872.9 438l-1.5 -7.4l1.3 7.4zM874.9 438l-0.3 -3.7l1.3 3.7zM876.3 438l-0.4 -7.0l1.3 7.0zM877.6 438l-1.2 -5.7l1.3 5.7zM879.9 438l0.2 -4.0l1.3 4.0zM883.0 438l-0.2 -6.9l1.3 6.9zM885.8 438l-0.4 -5.9l1.3 5.9zM887.3 438l0.2 -5.6l1.3 5.6zM890.4 438l0.3 -7.8l1.3 7.8zM892.3 438l-1.5 -7.4l1.3 7.4zM893.7 438l0.3 -5.4l1.3 5.4zM895.2 438l1.2 -5.8l1.3 5.8zM897.2 438l-0.8 -4.6l1.3 4.6zM898.9 438l-0.4 -7.8l1.3 7.8zM902.1 438l0.3 -7.5l1.3 7.5zM903.8 438l-0.0 -7.9l1.3 7.9zM905.8 438l1.5 -3.9l1.3 3.9zM908.0 438l-0.1 -3.7l1.3 3.7zM909.4 438l-0.2 -5.7l1.3 5.7zM911.2 438l1.0 -6.7l1.3 6.7zM912.5 438l-0.7 -5.2l1.3 5.2zM915.5 438l-0.8 -6.7l1.3 6.7zM917.3 438l1.5 -2.9l1.3 2.9zM919.0 438l-0.1 -5.6l1.3 5.6zM921.5 438l0.7 -5.6l1.3 5.6zM923.0 438l-0.6 -6.6l1.3 6.6zM925.2 438l-0.6 -4.0l1.3 4.0zM927.5 438l-0.4 -4.8l1.3 4.8zM930.2 438l-1.4 -5.5l1.3 5.5zM931.9 438l1.2 -4.7l1.3 4.7zM934.9 438l-1.5 -5.3l1.3 5.3zM937.6 438l0.2 -4.6l1.3 4.6zM940.2 438l-0.1 -5.8l1.3 5.8zM943.3 438l-0.3 -4.3l1.3 4.3zM946.2 438l-0.6 -3.2l1.3 3.2zM949.0 438l1.0 -2.4l1.3 2.4zM951.6 438l-0.6 -4.6l1.3 4.6zM954.4 438l-1.1 -7.5l1.3 7.5zM956.5 438l-0.0 -5.3l1.3 5.3zM958.4 438l0.3 -2.9l1.3 2.9zM961.2 438l-0.8 -2.4l1.3 2.4zM964.1 438l0.5 -6.8l1.3 6.8zM965.3 438l1.4 -6.3l1.3 6.3zM968.5 438l-1.4 -6.2l1.3 6.2zM971.4 438l0.4 -3.3l1.3 3.3zM974.5 438l-1.1 -6.3l1.3 6.3zM976.3 438l-1.1 -7.5l1.3 7.5zM978.7 438l-1.0 -4.5l1.3 4.5zM981.1 438l-1.2 -2.3l1.3 2.3zM983.1 438l-1.3 -2.4l1.3 2.4zM985.5 438l1.1 -6.5l1.3 6.5zM986.9 438l-0.6 -4.6l1.3 4.6zM989.3 438l1.3 -4.9l1.3 4.9zM991.3 438l0.6 -2.3l1.3 2.3zM992.8 438l0.0 -5.8l1.3 5.8zM995.8 438l0.4 -5.3l1.3 5.3zM997.5 438l-0.7 -5.3l1.3 5.3zM1000.2 438l-1.1 -5.1l1.3 5.1zM1001.9 438l0.7 -4.2l1.3 4.2zM1003.5 438l0.5 -6.3l1.3 6.3zM1004.8 438l-1.2 -6.0l1.3 6.0zM1006.3 438l-0.8 -5.6l1.3 5.6zM1009.2 438l-0.5 -4.9l1.3 4.9zM1012.0 438l0.7 -2.2l1.3 2.2zM1013.3 438l1.4 -2.9l1.3 2.9zM1015.9 438l-1.2 -3.3l1.3 3.3zM1019.0 438l1.0 -6.0l1.3 6.0zM1020.5 438l-0.4 -5.7l1.3 5.7zM1022.2 438l0.3 -4.0l1.3 4.0zM1024.1 438l-1.1 -4.3l1.3 4.3zM1026.9 438l0.9 -5.9l1.3 5.9zM1029.0 438l0.1 -7.1l1.3 7.1zM1031.4 438l0.7 -8.2l1.3 8.2zM1033.4 438l-1.4 -3.9l1.3 3.9zM1035.0 438l1.2 -3.4l1.3 3.4zM1037.2 438l-1.5 -9.8l1.3 9.8zM1039.3 438l0.4 -11.0l1.3 11.0zM1041.4 438l-1.2 -7.2l1.3 7.2zM1042.9 438l-0.4 -4.4l1.3 4.4zM1044.8 438l-1.0 -10.9l1.3 10.9zM1046.5 438l-1.0 -5.5l1.3 5.5zM1048.3 438l-0.1 -5.1l1.3 5.1zM1049.6 438l-0.4 -11.3l1.3 11.3zM1052.7 438l0.5 -9.2l1.3 9.2zM1054.8 438l-1.1 -11.5l1.3 11.5zM1057.3 438l0.5 -5.6l1.3 5.6zM1060.0 438l-0.9 -4.5l1.3 4.5zM1061.2 438l-1.3 -5.1l1.3 5.1zM1063.2 438l-0.4 -7.8l1.3 7.8z" fill="#1a96d8"/>
<path d="M734 444.500h16M738 442.500v4M742.500 442.500v4M747 442.500v3" stroke="#8fd0f0" stroke-width=".7" opacity=".8"/>
<path d="M759.2 262.3 764.4 260.7 762.7 277.2 757.0 278.7ZM759.2 262.3 771.5 258.6 771.1 265.4 758.3 269.0ZM766.3 260.2 771.5 258.6 770.8 270.8 765.2 272.3ZM773.0 262.6 779.1 263.1 778.5 276.0 772.2 275.3ZM781.6 259.1 787.6 259.5 787.1 277.0 780.8 276.3ZM774.9 258.6 787.6 259.5 787.4 266.7 774.5 265.5ZM789.4 262.6 795.4 263.7 795.2 279.0 789.0 277.6ZM797.7 264.1 803.7 265.2 803.7 280.9 797.5 279.5ZM791.4 260.1 801.8 261.8 801.8 269.4 791.2 267.4ZM805.6 262.3 811.4 262.1 812.0 282.1 805.9 281.5ZM813.6 264.1 819.4 264.1 820.3 283.1 814.2 282.4ZM805.6 262.3 818.1 262.0 818.5 270.5 805.7 270.1ZM805.8 278.7 820.2 280.1 820.3 283.1 805.9 281.5ZM821.4 265.2 827.9 264.1 828.6 281.9 822.1 283.0ZM830.2 263.7 836.7 262.6 837.4 280.4 831.0 281.5ZM823.3 261.4 834.5 259.5 834.9 268.2 823.6 270.1ZM837.7 245.7 847.2 243.2 847.7 265.0 838.5 266.5ZM850.8 242.3 860.3 239.8 860.4 263.0 851.1 264.5ZM838.4 264.8 860.4 261.1 860.4 263.0 838.5 266.5ZM863.1 239.4 871.8 238.7 871.8 262.6 863.1 262.8ZM875.1 238.4 883.8 237.7 883.8 258.9 875.1 259.1ZM863.1 257.5 880.4 257.0 880.4 262.5 863.1 262.8ZM886.4 237.7 895.1 238.4 895.3 263.9 886.5 262.9ZM898.3 238.7 907.0 239.4 907.4 265.2 898.6 264.2ZM886.4 237.7 907.0 239.4 907.1 249.9 886.4 248.0ZM886.5 260.9 907.4 263.1 907.4 265.2 886.5 262.9ZM909.6 244.1 918.5 245.0 918.7 268.5 909.9 267.1ZM921.8 245.3 930.7 246.1 930.7 270.3 921.9 269.0ZM912.4 239.8 927.9 241.2 927.9 252.9 912.5 251.1ZM933.8 241.5 942.7 241.5 942.5 272.0 934.0 271.0ZM932.7 233.1 937.2 233.0 937.2 238.5 932.8 238.5ZM939.4 232.9 943.8 232.8 943.7 238.4 939.3 238.4ZM945.9 241.1 955.9 237.8 955.1 271.1 945.8 272.3ZM959.6 236.7 969.6 233.4 967.8 269.5 958.5 270.7ZM945.8 267.8 968.0 264.4 967.8 269.5 945.8 272.3ZM972.7 233.2 981.2 234.1 979.6 269.7 971.1 269.3ZM984.6 234.1 992.2 233.2 990.6 268.3 983.0 269.2Z" fill="#1db0ea"/><path d="M757.0 278.7 762.7 277.2 760.9 294.4 754.6 295.7ZM755.5 289.0 770.0 285.8 769.6 292.6 754.6 295.7ZM764.3 282.4 770.2 281.0 769.6 292.6 763.3 293.9ZM772.2 275.3 778.5 276.0 777.6 293.9 771.1 292.9ZM780.8 276.3 787.1 277.0 786.5 295.2 780.0 294.2ZM789.0 277.6 795.2 279.0 794.9 297.9 788.5 296.1ZM797.5 279.5 803.7 280.9 803.8 300.4 797.3 298.6ZM789.0 277.9 803.7 281.3 803.7 288.1 788.8 284.5ZM805.9 281.5 812.0 282.1 812.6 303.0 806.2 301.4ZM814.2 282.4 820.3 283.1 821.3 302.9 814.9 301.5ZM805.9 281.5 820.3 283.1 820.6 287.8 806.0 285.8ZM806.1 293.6 819.6 296.2 820.0 304.8 806.2 301.4ZM822.1 283.0 828.6 281.9 829.5 304.1 823.1 305.2ZM831.0 281.5 837.4 280.4 838.4 302.5 831.9 303.6ZM822.2 283.5 837.4 280.8 837.8 288.7 822.5 291.3ZM838.5 266.5 847.7 265.0 847.9 270.8 838.7 272.1ZM851.1 264.5 860.4 263.0 860.4 287.1 851.5 287.6ZM838.5 266.5 860.4 263.0 860.4 269.1 838.7 272.1ZM840.2 280.5 860.4 278.6 860.4 287.1 840.5 288.2ZM863.1 262.8 871.8 262.6 871.8 287.6 863.1 287.1ZM875.1 267.0 883.8 267.0 883.8 288.2 875.1 287.7ZM863.1 262.8 880.4 262.5 880.4 269.0 863.1 269.0ZM886.5 262.9 895.3 263.9 895.5 290.4 886.5 289.2ZM898.6 264.2 907.4 265.2 907.5 272.0 898.6 271.0ZM886.5 262.9 907.4 265.2 907.5 272.0 886.5 269.6ZM909.9 267.1 918.7 268.5 918.9 297.7 910.2 295.8ZM921.9 269.0 930.7 270.3 930.8 300.4 922.1 298.5ZM909.9 267.7 930.7 270.9 930.7 281.5 910.0 277.8ZM934.0 271.0 942.5 272.0 942.2 303.7 934.2 301.7ZM945.8 272.3 955.1 271.1 954.2 305.7 945.7 304.7ZM958.5 270.7 967.8 269.5 965.9 307.1 957.4 306.1ZM945.8 272.3 967.8 269.5 967.4 277.6 945.8 279.3ZM971.1 269.3 979.6 269.7 977.9 306.7 969.5 306.9ZM983.0 269.2 990.6 268.3 989.7 287.6 982.1 288.5ZM981.8 294.2 989.4 293.3 988.9 304.8 981.3 305.7Z" fill="#ffe512"/>
</g>
</svg><!--/POSTER-->
<!--HANDS--><svg class="abs" style="left:208px;top:501px" width="383" height="122" viewBox="208 501 383 122"><defs><g id="hnd"><path d="M-4.200 -0.500L-4.400 6.500Q-4.400 8 -3 8L3 8Q4.400 8 4.400 6.500L4.200 -0.500Z"/><path d="M-3.600 0V-6.500M-1.300 0V-8.600M1.100 0V-9M3.400 0V-7.200" stroke-width="1.500" stroke-linecap="round" fill="none"/><path d="M-4.200 4.500L-7.300 0.200" stroke-width="1.900" stroke-linecap="round" fill="none"/></g></defs><rect x="208" y="501" width="383" height="122" fill="#000"/>
<use href="#hnd" fill="#1e9fdc" stroke="#1e9fdc" transform="translate(274.3 548.8) rotate(235) scale(0.83)"/>
<use href="#hnd" fill="#ffe61e" stroke="#ffe61e" transform="translate(352.5 518.8) rotate(270) scale(0.87)"/>
<use href="#hnd" fill="#1e9fdc" stroke="#1e9fdc" transform="translate(282.8 520.1) rotate(102) scale(0.84)"/>
<use href="#hnd" fill="#1e9fdc" stroke="#1e9fdc" transform="translate(273.6 581.2) rotate(162) scale(0.87)"/>
<use href="#hnd" fill="#ffe61e" stroke="#ffe61e" transform="translate(402.7 552.9) rotate(212) scale(0.88)"/>
<use href="#hnd" fill="#1e9fdc" stroke="#1e9fdc" transform="translate(498.7 541.1) rotate(12) scale(0.81)"/>
<use href="#hnd" fill="#1e9fdc" stroke="#1e9fdc" transform="translate(352.5 572.8) rotate(49) scale(0.80)"/>
<use href="#hnd" fill="#1e9fdc" stroke="#1e9fdc" transform="translate(436.1 533.5) rotate(337) scale(0.90)"/>
<use href="#hnd" fill="#1e9fdc" stroke="#1e9fdc" transform="translate(538.0 533.4) rotate(31) scale(0.83)"/>
<use href="#hnd" fill="#ffe61e" stroke="#ffe61e" transform="translate(571.0 563.3) rotate(11) scale(0.83)"/>
<use href="#hnd" fill="#1e9fdc" stroke="#1e9fdc" transform="translate(310.0 556.5) rotate(4) scale(0.92)"/>
<use href="#hnd" fill="#1e9fdc" stroke="#1e9fdc" transform="translate(353.1 527.7) rotate(150) scale(0.86)"/>
<use href="#hnd" fill="#1e9fdc" stroke="#1e9fdc" transform="translate(388.6 549.8) rotate(167) scale(0.90)"/>
<use href="#hnd" fill="#1e9fdc" stroke="#1e9fdc" transform="translate(547.8 574.0) rotate(32) scale(0.86)"/>
<use href="#hnd" fill="#ffe61e" stroke="#ffe61e" transform="translate(546.5 558.5) rotate(238) scale(0.88)"/>
<use href="#hnd" fill="#1e9fdc" stroke="#1e9fdc" transform="translate(388.5 581.2) rotate(220) scale(0.82)"/>
<use href="#hnd" fill="#ffe61e" stroke="#ffe61e" transform="translate(532.7 565.0) rotate(179) scale(0.88)"/>
<use href="#hnd" fill="#ffe61e" stroke="#ffe61e" transform="translate(436.1 518.3) rotate(289) scale(0.90)"/>
<use href="#hnd" fill="#1e9fdc" stroke="#1e9fdc" transform="translate(310.3 595.1) rotate(331) scale(0.86)"/>
<use href="#hnd" fill="#ffe61e" stroke="#ffe61e" transform="translate(539.5 520.2) rotate(15) scale(0.89)"/>
<use href="#hnd" fill="#1e9fdc" stroke="#1e9fdc" transform="translate(275.0 589.1) rotate(170) scale(0.88)"/>
<use href="#hnd" fill="#1e9fdc" stroke="#1e9fdc" transform="translate(436.0 542.9) rotate(242) scale(0.81)"/>
<use href="#hnd" fill="#1e9fdc" stroke="#1e9fdc" transform="translate(353.0 550.1) rotate(298) scale(0.89)"/>
<use href="#hnd" fill="#1e9fdc" stroke="#1e9fdc" transform="translate(456.7 538.4) rotate(128) scale(0.87)"/>
<use href="#hnd" fill="#1e9fdc" stroke="#1e9fdc" transform="translate(400.3 545.4) rotate(68) scale(0.84)"/>
<use href="#hnd" fill="#ffe61e" stroke="#ffe61e" transform="translate(434.6 548.9) rotate(354) scale(0.80)"/>
<use href="#hnd" fill="#ffe61e" stroke="#ffe61e" transform="translate(252.5 587.6) rotate(133) scale(0.90)"/>
<use href="#hnd" fill="#1e9fdc" stroke="#1e9fdc" transform="translate(499.1 519.1) rotate(257) scale(0.86)"/>
<use href="#hnd" fill="#1e9fdc" stroke="#1e9fdc" transform="translate(435.6 566.3) rotate(280) scale(0.89)"/>
<use href="#hnd" fill="#ffe61e" stroke="#ffe61e" transform="translate(535.3 558.0) rotate(57) scale(0.91)"/>
<use href="#hnd" fill="#1e9fdc" stroke="#1e9fdc" transform="translate(310.7 542.0) rotate(321) scale(0.89)"/>
<use href="#hnd" fill="#ffe61e" stroke="#ffe61e" transform="translate(428.6 532.4) rotate(2) scale(0.91)"/>
<use href="#hnd" fill="#ffe61e" stroke="#ffe61e" transform="translate(361.8 597.2) rotate(124) scale(0.85)"/>
<use href="#hnd" fill="#ffe61e" stroke="#ffe61e" transform="translate(254.5 579.7) rotate(287) scale(0.90)"/>
<use href="#hnd" fill="#1e9fdc" stroke="#1e9fdc" transform="translate(407.4 575.1) rotate(32) scale(0.85)"/>
<use href="#hnd" fill="#1e9fdc" stroke="#1e9fdc" transform="translate(542.9 542.1) rotate(259) scale(0.91)"/>
<use href="#hnd" fill="#1e9fdc" stroke="#1e9fdc" transform="translate(334.0 527.0) rotate(152) scale(0.91)"/>
<use href="#hnd" fill="#ffe61e" stroke="#ffe61e" transform="translate(309.9 519.1) rotate(154) scale(0.81)"/>
<use href="#hnd" fill="#ffe61e" stroke="#ffe61e" transform="translate(552.5 589.3) rotate(169) scale(0.82)"/>
<use href="#hnd" fill="#ffe61e" stroke="#ffe61e" transform="translate(274.9 565.4) rotate(158) scale(0.83)"/>
<use href="#hnd" fill="#ffe61e" stroke="#ffe61e" transform="translate(353.6 558.3) rotate(158) scale(0.92)"/>
<use href="#hnd" fill="#1e9fdc" stroke="#1e9fdc" transform="translate(480.7 576.2) rotate(185) scale(0.85)"/>
<use href="#hnd" fill="#ffe61e" stroke="#ffe61e" transform="translate(274.3 557.0) rotate(313) scale(0.88)"/>
<use href="#hnd" fill="#ffe61e" stroke="#ffe61e" transform="translate(388.5 588.1) rotate(98) scale(0.84)"/>
<use href="#hnd" fill="#1e9fdc" stroke="#1e9fdc" transform="translate(311.1 548.7) rotate(136) scale(0.86)"/>
<use href="#hnd" fill="#ffe61e" stroke="#ffe61e" transform="translate(352.6 564.2) rotate(356) scale(0.85)"/>
<use href="#hnd" fill="#ffe61e" stroke="#ffe61e" transform="translate(482.5 558.2) rotate(165) scale(0.84)"/>
<use href="#hnd" fill="#1e9fdc" stroke="#1e9fdc" transform="translate(498.1 589.3) rotate(177) scale(0.87)"/>
<use href="#hnd" fill="#ffe61e" stroke="#ffe61e" transform="translate(434.6 557.3) rotate(189) scale(0.87)"/>
<use href="#hnd" fill="#1e9fdc" stroke="#1e9fdc" transform="translate(533.2 571.8) rotate(253) scale(0.91)"/>
<use href="#hnd" fill="#1e9fdc" stroke="#1e9fdc" transform="translate(475.3 590.2) rotate(102) scale(0.88)"/>
<use href="#hnd" fill="#1e9fdc" stroke="#1e9fdc" transform="translate(465.4 595.0) rotate(210) scale(0.91)"/>
<use href="#hnd" fill="#ffe61e" stroke="#ffe61e" transform="translate(352.4 542.4) rotate(316) scale(0.90)"/>
<use href="#hnd" fill="#ffe61e" stroke="#ffe61e" transform="translate(333.4 519.1) rotate(194) scale(0.92)"/>
<use href="#hnd" fill="#1e9fdc" stroke="#1e9fdc" transform="translate(227.7 548.9) rotate(195) scale(0.88)"/>
<use href="#hnd" fill="#ffe61e" stroke="#ffe61e" transform="translate(387.7 534.6) rotate(125) scale(0.82)"/>
<use href="#hnd" fill="#1e9fdc" stroke="#1e9fdc" transform="translate(497.8 564.2) rotate(280) scale(0.90)"/>
<use href="#hnd" fill="#1e9fdc" stroke="#1e9fdc" transform="translate(360.5 557.3) rotate(32) scale(0.92)"/>
<use href="#hnd" fill="#ffe61e" stroke="#ffe61e" transform="translate(463.8 520.6) rotate(254) scale(0.91)"/>
<use href="#hnd" fill="#1e9fdc" stroke="#1e9fdc" transform="translate(435.2 589.1) rotate(205) scale(0.87)"/>
<use href="#hnd" fill="#ffe61e" stroke="#ffe61e" transform="translate(370.6 597.2) rotate(228) scale(0.89)"/>
<use href="#hnd" fill="#ffe61e" stroke="#ffe61e" transform="translate(361.1 519.6) rotate(174) scale(0.83)"/>
<use href="#hnd" fill="#ffe61e" stroke="#ffe61e" transform="translate(387.8 525.8) rotate(173) scale(0.90)"/>
<use href="#hnd" fill="#1e9fdc" stroke="#1e9fdc" transform="translate(334.9 532.8) rotate(102) scale(0.87)"/>
<use href="#hnd" fill="#ffe61e" stroke="#ffe61e" transform="translate(570.0 571.7) rotate(28) scale(0.83)"/>
<use href="#hnd" fill="#1e9fdc" stroke="#1e9fdc" transform="translate(253.2 573.2) rotate(76) scale(0.81)"/>
<use href="#hnd" fill="#1e9fdc" stroke="#1e9fdc" transform="translate(227.2 557.2) rotate(147) scale(0.90)"/>
<use href="#hnd" fill="#ffe61e" stroke="#ffe61e" transform="translate(436.2 526.3) rotate(34) scale(0.92)"/>
<use href="#hnd" fill="#ffe61e" stroke="#ffe61e" transform="translate(551.1 581.7) rotate(315) scale(0.81)"/>
<use href="#hnd" fill="#1e9fdc" stroke="#1e9fdc" transform="translate(552.1 596.6) rotate(210) scale(0.90)"/>
<use href="#hnd" fill="#1e9fdc" stroke="#1e9fdc" transform="translate(421.5 554.0) rotate(267) scale(0.85)"/>
<use href="#hnd" fill="#1e9fdc" stroke="#1e9fdc" transform="translate(542.6 534.2) rotate(194) scale(0.82)"/>
<use href="#hnd" fill="#1e9fdc" stroke="#1e9fdc" transform="translate(289.2 557.0) rotate(67) scale(0.84)"/>
<use href="#hnd" fill="#ffe61e" stroke="#ffe61e" transform="translate(396.5 530.9) rotate(357) scale(0.89)"/>
<use href="#hnd" fill="#ffe61e" stroke="#ffe61e" transform="translate(497.8 572.7) rotate(108) scale(0.90)"/>
<use href="#hnd" fill="#1e9fdc" stroke="#1e9fdc" transform="translate(477.5 529.6) rotate(185) scale(0.81)"/>
<use href="#hnd" fill="#1e9fdc" stroke="#1e9fdc" transform="translate(402.9 559.1) rotate(207) scale(0.87)"/>
<use href="#hnd" fill="#1e9fdc" stroke="#1e9fdc" transform="translate(412.6 588.4) rotate(182) scale(0.81)"/>
<use href="#hnd" fill="#1e9fdc" stroke="#1e9fdc" transform="translate(253.1 542.2) rotate(99) scale(0.89)"/>
<use href="#hnd" fill="#ffe61e" stroke="#ffe61e" transform="translate(476.6 584.6) rotate(305) scale(0.84)"/>
<use href="#hnd" fill="#ffe61e" stroke="#ffe61e" transform="translate(411.0 580.7) rotate(241) scale(0.91)"/>
<use href="#hnd" fill="#1e9fdc" stroke="#1e9fdc" transform="translate(529.4 596.1) rotate(349) scale(0.92)"/>
<use href="#hnd" fill="#1e9fdc" stroke="#1e9fdc" transform="translate(388.0 557.3) rotate(178) scale(0.86)"/>
<use href="#hnd" fill="#ffe61e" stroke="#ffe61e" transform="translate(529.1 589.3) rotate(174) scale(0.92)"/>
<use href="#hnd" fill="#ffe61e" stroke="#ffe61e" transform="translate(335.2 539.5) rotate(10) scale(0.84)"/>
<use href="#hnd" fill="#1e9fdc" stroke="#1e9fdc" transform="translate(546.6 564.8) rotate(246) scale(0.81)"/>
<use href="#hnd" fill="#ffe61e" stroke="#ffe61e" transform="translate(474.3 524.9) rotate(260) scale(0.87)"/>
<use href="#hnd" fill="#ffe61e" stroke="#ffe61e" transform="translate(236.8 517.9) rotate(90) scale(0.80)"/>
<use href="#hnd" fill="#ffe61e" stroke="#ffe61e" transform="translate(331.6 560.6) rotate(327) scale(0.82)"/>
<use href="#hnd" fill="#ffe61e" stroke="#ffe61e" transform="translate(498.3 533.5) rotate(18) scale(0.85)"/>
<use href="#hnd" fill="#1e9fdc" stroke="#1e9fdc" transform="translate(570.7 548.4) rotate(56) scale(0.87)"/>
<use href="#hnd" fill="#ffe61e" stroke="#ffe61e" transform="translate(435.9 572.6) rotate(230) scale(0.82)"/>
<use href="#hnd" fill="#ffe61e" stroke="#ffe61e" transform="translate(253.0 525.8) rotate(49) scale(0.81)"/>
<use href="#hnd" fill="#1e9fdc" stroke="#1e9fdc" transform="translate(498.5 558.3) rotate(111) scale(0.90)"/>
<use href="#hnd" fill="#ffe61e" stroke="#ffe61e" transform="translate(274.5 572.2) rotate(261) scale(0.84)"/>
<use href="#hnd" fill="#1e9fdc" stroke="#1e9fdc" transform="translate(456.3 577.1) rotate(343) scale(0.92)"/>
<use href="#hnd" fill="#ffe61e" stroke="#ffe61e" transform="translate(513.3 518.4) rotate(226) scale(0.91)"/>
<use href="#hnd" fill="#1e9fdc" stroke="#1e9fdc" transform="translate(317.6 519.6) rotate(80) scale(0.85)"/>
<use href="#hnd" fill="#1e9fdc" stroke="#1e9fdc" transform="translate(482.2 547.5) rotate(85) scale(0.86)"/>
<use href="#hnd" fill="#1e9fdc" stroke="#1e9fdc" transform="translate(310.1 527.6) rotate(178) scale(0.86)"/>
<use href="#hnd" fill="#1e9fdc" stroke="#1e9fdc" transform="translate(283.6 596.6) rotate(296) scale(0.88)"/>
<use href="#hnd" fill="#ffe61e" stroke="#ffe61e" transform="translate(252.7 518.2) rotate(140) scale(0.87)"/>
<use href="#hnd" fill="#ffe61e" stroke="#ffe61e" transform="translate(311.6 535.2) rotate(105) scale(0.87)"/>
<use href="#hnd" fill="#ffe61e" stroke="#ffe61e" transform="translate(273.9 595.6) rotate(209) scale(0.87)"/>
<use href="#hnd" fill="#1e9fdc" stroke="#1e9fdc" transform="translate(389.3 565.1) rotate(204) scale(0.91)"/>
<use href="#hnd" fill="#1e9fdc" stroke="#1e9fdc" transform="translate(436.5 580.8) rotate(112) scale(0.86)"/>
<use href="#hnd" fill="#1e9fdc" stroke="#1e9fdc" transform="translate(273.6 527.6) rotate(275) scale(0.85)"/>
<use href="#hnd" fill="#ffe61e" stroke="#ffe61e" transform="translate(459.4 529.9) rotate(118) scale(0.89)"/>
<use href="#hnd" fill="#ffe61e" stroke="#ffe61e" transform="translate(353.9 587.8) rotate(325) scale(0.83)"/>
<use href="#hnd" fill="#ffe61e" stroke="#ffe61e" transform="translate(505.8 520.1) rotate(165) scale(0.84)"/>
<use href="#hnd" fill="#1e9fdc" stroke="#1e9fdc" transform="translate(326.1 517.9) rotate(30) scale(0.92)"/>
<use href="#hnd" fill="#ffe61e" stroke="#ffe61e" transform="translate(499.1 549.5) rotate(287) scale(0.86)"/>
<use href="#hnd" fill="#1e9fdc" stroke="#1e9fdc" transform="translate(387.7 595.0) rotate(213) scale(0.87)"/>
<use href="#hnd" fill="#ffe61e" stroke="#ffe61e" transform="translate(538.6 525.6) rotate(292) scale(0.80)"/>
<use href="#hnd" fill="#1e9fdc" stroke="#1e9fdc" transform="translate(319.0 559.3) rotate(8) scale(0.85)"/>
<use href="#hnd" fill="#1e9fdc" stroke="#1e9fdc" transform="translate(227.1 564.7) rotate(196) scale(0.87)"/>
<use href="#hnd" fill="#1e9fdc" stroke="#1e9fdc" transform="translate(274.4 533.4) rotate(9) scale(0.80)"/>
<use href="#hnd" fill="#1e9fdc" stroke="#1e9fdc" transform="translate(458.4 585.7) rotate(256) scale(0.87)"/>
<use href="#hnd" fill="#1e9fdc" stroke="#1e9fdc" transform="translate(228.2 518.6) rotate(126) scale(0.88)"/>
<use href="#hnd" fill="#1e9fdc" stroke="#1e9fdc" transform="translate(387.5 573.2) rotate(290) scale(0.81)"/>
<use href="#hnd" fill="#ffe61e" stroke="#ffe61e" transform="translate(471.1 593.5) rotate(355) scale(0.88)"/>
<use href="#hnd" fill="#1e9fdc" stroke="#1e9fdc" transform="translate(227.6 533.3) rotate(167) scale(0.86)"/>
<use href="#hnd" fill="#1e9fdc" stroke="#1e9fdc" transform="translate(228.5 581.6) rotate(40) scale(0.88)"/>
<use href="#hnd" fill="#1e9fdc" stroke="#1e9fdc" transform="translate(311.4 580.2) rotate(229) scale(0.84)"/>
<use href="#hnd" fill="#ffe61e" stroke="#ffe61e" transform="translate(282.2 557.4) rotate(99) scale(0.88)"/>
<use href="#hnd" fill="#1e9fdc" stroke="#1e9fdc" transform="translate(406.8 568.0) rotate(56) scale(0.89)"/>
<use href="#hnd" fill="#1e9fdc" stroke="#1e9fdc" transform="translate(254.2 534.0) rotate(173) scale(0.80)"/>
<use href="#hnd" fill="#1e9fdc" stroke="#1e9fdc" transform="translate(393.7 524.9) rotate(212) scale(0.81)"/>
<use href="#hnd" fill="#1e9fdc" stroke="#1e9fdc" transform="translate(273.8 543.1) rotate(322) scale(0.88)"/>
<use href="#hnd" fill="#ffe61e" stroke="#ffe61e" transform="translate(253.6 566.0) rotate(339) scale(0.92)"/>
<use href="#hnd" fill="#1e9fdc" stroke="#1e9fdc" transform="translate(571.4 542.4) rotate(344) scale(0.83)"/>
<use href="#hnd" fill="#ffe61e" stroke="#ffe61e" transform="translate(352.8 595.1) rotate(144) scale(0.85)"/>
<use href="#hnd" fill="#ffe61e" stroke="#ffe61e" transform="translate(571.7 519.7) rotate(286) scale(0.87)"/>
<use href="#hnd" fill="#ffe61e" stroke="#ffe61e" transform="translate(335.4 546.8) rotate(321) scale(0.84)"/>
<use href="#hnd" fill="#1e9fdc" stroke="#1e9fdc" transform="translate(389.4 518.8) rotate(152) scale(0.84)"/>
<use href="#hnd" fill="#1e9fdc" stroke="#1e9fdc" transform="translate(354.2 533.5) rotate(327) scale(0.84)"/>
<use href="#hnd" fill="#ffe61e" stroke="#ffe61e" transform="translate(478.6 538.4) rotate(186) scale(0.84)"/>
<use href="#hnd" fill="#1e9fdc" stroke="#1e9fdc" transform="translate(396.8 538.1) rotate(330) scale(0.87)"/>
<use href="#hnd" fill="#ffe61e" stroke="#ffe61e" transform="translate(354.4 581.1) rotate(190) scale(0.84)"/>
<use href="#hnd" fill="#ffe61e" stroke="#ffe61e" transform="translate(420.2 558.8) rotate(196) scale(0.85)"/>
<use href="#hnd" fill="#1e9fdc" stroke="#1e9fdc" transform="translate(254.2 595.9) rotate(246) scale(0.89)"/>
<use href="#hnd" fill="#1e9fdc" stroke="#1e9fdc" transform="translate(228.6 527.8) rotate(178) scale(0.80)"/>
<use href="#hnd" fill="#1e9fdc" stroke="#1e9fdc" transform="translate(462.4 591.2) rotate(200) scale(0.87)"/>
<use href="#hnd" fill="#1e9fdc" stroke="#1e9fdc" transform="translate(371.4 519.4) rotate(51) scale(0.89)"/>
<use href="#hnd" fill="#ffe61e" stroke="#ffe61e" transform="translate(334.4 553.4) rotate(44) scale(0.84)"/>
<use href="#hnd" fill="#1e9fdc" stroke="#1e9fdc" transform="translate(454.0 548.2) rotate(106) scale(0.83)"/>
<use href="#hnd" fill="#ffe61e" stroke="#ffe61e" transform="translate(312.0 587.5) rotate(259) scale(0.90)"/>
<use href="#hnd" fill="#ffe61e" stroke="#ffe61e" transform="translate(431.6 525.6) rotate(270) scale(0.83)"/>
<use href="#hnd" fill="#1e9fdc" stroke="#1e9fdc" transform="translate(388.2 541.2) rotate(68) scale(0.82)"/>
<use href="#hnd" fill="#1e9fdc" stroke="#1e9fdc" transform="translate(418.5 566.9) rotate(169) scale(0.85)"/>
<use href="#hnd" fill="#1e9fdc" stroke="#1e9fdc" transform="translate(226.6 573.2) rotate(224) scale(0.88)"/>
<use href="#hnd" fill="#1e9fdc" stroke="#1e9fdc" transform="translate(325.2 560.0) rotate(13) scale(0.81)"/>
<use href="#hnd" fill="#1e9fdc" stroke="#1e9fdc" transform="translate(570.8 534.8) rotate(355) scale(0.84)"/>
<use href="#hnd" fill="#ffe61e" stroke="#ffe61e" transform="translate(226.6 587.6) rotate(334) scale(0.84)"/>
<use href="#hnd" fill="#ffe61e" stroke="#ffe61e" transform="translate(254.5 550.1) rotate(174) scale(0.90)"/>
<use href="#hnd" fill="#ffe61e" stroke="#ffe61e" transform="translate(254.2 556.9) rotate(114) scale(0.85)"/>
<use href="#hnd" fill="#ffe61e" stroke="#ffe61e" transform="translate(460.5 523.7) rotate(94) scale(0.90)"/>
<use href="#hnd" fill="#ffe61e" stroke="#ffe61e" transform="translate(227.1 541.6) rotate(74) scale(0.82)"/>
<use href="#hnd" fill="#ffe61e" stroke="#ffe61e" transform="translate(291.6 595.5) rotate(91) scale(0.84)"/>
<use href="#hnd" fill="#ffe61e" stroke="#ffe61e" transform="translate(545.5 549.1) rotate(185) scale(0.88)"/>
<use href="#hnd" fill="#ffe61e" stroke="#ffe61e" transform="translate(572.0 557.0) rotate(254) scale(0.91)"/>
<use href="#hnd" fill="#ffe61e" stroke="#ffe61e" transform="translate(434.6 595.9) rotate(280) scale(0.85)"/>
<use href="#hnd" fill="#1e9fdc" stroke="#1e9fdc" transform="translate(499.4 595.4) rotate(33) scale(0.83)"/>
<use href="#hnd" fill="#1e9fdc" stroke="#1e9fdc" transform="translate(226.9 596.2) rotate(263) scale(0.81)"/>
<use href="#hnd" fill="#1e9fdc" stroke="#1e9fdc" transform="translate(536.1 542.7) rotate(329) scale(0.86)"/>
<use href="#hnd" fill="#1e9fdc" stroke="#1e9fdc" transform="translate(472.5 519.1) rotate(52) scale(0.82)"/>
<use href="#hnd" fill="#1e9fdc" stroke="#1e9fdc" transform="translate(244.5 518.2) rotate(273) scale(0.90)"/>
<use href="#hnd" fill="#ffe61e" stroke="#ffe61e" transform="translate(291.3 519.7) rotate(164) scale(0.90)"/>
<use href="#hnd" fill="#ffe61e" stroke="#ffe61e" transform="translate(368.6 558.3) rotate(50) scale(0.82)"/>
<use href="#hnd" fill="#ffe61e" stroke="#ffe61e" transform="translate(427.0 538.2) rotate(231) scale(0.83)"/>
<use href="#hnd" fill="#1e9fdc" stroke="#1e9fdc" transform="translate(273.1 518.8) rotate(190) scale(0.90)"/>
<use href="#hnd" fill="#1e9fdc" stroke="#1e9fdc" transform="translate(572.0 525.5) rotate(88) scale(0.88)"/>
<use href="#hnd" fill="#ffe61e" stroke="#ffe61e" transform="translate(530.7 580.6) rotate(284) scale(0.90)"/>
<use href="#hnd" fill="#1e9fdc" stroke="#1e9fdc" transform="translate(536.7 550.0) rotate(323) scale(0.84)"/>
<use href="#hnd" fill="#1e9fdc" stroke="#1e9fdc" transform="translate(481.0 568.4) rotate(320) scale(0.82)"/>
<use href="#hnd" fill="#ffe61e" stroke="#ffe61e" transform="translate(453.6 558.6) rotate(42) scale(0.84)"/>
<use href="#hnd" fill="#ffe61e" stroke="#ffe61e" transform="translate(309.9 566.2) rotate(151) scale(0.90)"/>
<use href="#hnd" fill="#ffe61e" stroke="#ffe61e" transform="translate(310.7 572.5) rotate(156) scale(0.83)"/>
<use href="#hnd" fill="#ffe61e" stroke="#ffe61e" transform="translate(497.9 581.4) rotate(316) scale(0.84)"/>
<use href="#hnd" fill="#ffe61e" stroke="#ffe61e" transform="translate(454.9 566.5) rotate(350) scale(0.85)"/>
<use href="#hnd" fill="#ffe61e" stroke="#ffe61e" transform="translate(572.1 593.9) rotate(236) scale(0.85)"/>
<use href="#hnd" fill="#ffe61e" stroke="#ffe61e" transform="translate(415.8 574.1) rotate(314) scale(0.85)"/>
<use href="#hnd" fill="#1e9fdc" stroke="#1e9fdc" transform="translate(498.3 525.8) rotate(234) scale(0.91)"/>
<use href="#hnd" fill="#1e9fdc" stroke="#1e9fdc" transform="translate(425.3 546.2) rotate(47) scale(0.82)"/>
</svg><!--/HANDS-->
<!--BULB--><svg class="abs" style="left:591px;top:414px" width="122" height="124" viewBox="591 414 122 124">
<circle cx="652.200" cy="475.800" r="60" fill="#fff"/><circle cx="652.200" cy="475.500" r="52.500" fill="#a5b592"/>
<ellipse cx="652.200" cy="513.700" rx="7.600" ry="1.800" fill="#7c8a6e"/>
<path d="M652.200 434.500a18.700 18.700 0 0 1 18.700 18.700c0 6-4 10-6.700 14-2 3-2.500 5-2.500 8v5.500h-19v-5.500c0-3-.5-5-2.500-8-2.700-4-6.700-8-6.700-14a18.700 18.700 0 0 1 18.700-18.700z" fill="#f0a30f"/>
<path d="M659.500 439q6.500 3 9.500 10.500" stroke="#fff" stroke-width=".9" fill="none" opacity=".9"/>
<g fill="none" stroke="#5e3c0c" stroke-width=".6"><circle cx="643.600" cy="452.800" r="3.700"/><circle cx="651.800" cy="452.800" r="3.700"/><circle cx="660" cy="452.800" r="3.700"/><path d="M644.500 456.500l3.500 23.500M659 456.500l-3 23.500M647 472h9.800"/></g>
<path d="M643 480.500h18.500v9.500q-1.500 2.300-3.100 0-1.500 2.300-3.100 0-1.500 2.300-3.100 0-1.500 2.300-3.100 0-1.500 2.300-3.100 0-1.500 2.300-3 0z" fill="#444"/>
<path d="M644.500 491.500q1.500 1.500 3 0 1.500 1.500 3 0 1.500 1.500 3.100 0 1.500 1.500 3.100 0 1.500 1.500 3.100 0l-7.600 17.500z" fill="#fff"/>
<path d="M650 504.500h4.500l-2.250 4.500z" fill="#111"/>
</svg><!--/BULB-->
<div class="abs st" id="l1" style="left:194.800px;top:428px">Важливо все, що робить кожен з нас,</div>
<div class="abs st" id="l2" style="left:194.800px;top:452.600px">головне – не опускати рук</div>
<div class="abs bl" id="b1" style="left:712.600px;top:479.30px">- пісні, фільми</div>
<div class="abs bl" id="b2" style="left:712.600px;top:506.55px">- малюнки, плакати, меми</div>
<div class="abs bl" id="b3" style="left:712.600px;top:533.80px">- зацікавленість історією України</div>
<div class="abs bl" id="b4" style="left:712.600px;top:561.05px">- відмова від російської мови</div>
<div class="abs bl" id="b5" style="left:712.600px;top:588.30px">- дерусифікація українського простору</div>
<div class="abs bl" id="b6" style="left:712.600px;top:615.55px">- зміна навчальних програм</div>
<div id="page2title" class="abs">Ми – творці майбутнього.</div>
<div class="abs wm" id="wm1" style="left:1008px;top:633.500px;font-size:19px">Активация Windows</div>
<div class="abs wm" id="wm2" style="left:1008px;top:658.800px;font-size:14px">Чтобы активировать Windows, перейдите в</div>
<div class="abs wm" id="wm3" style="left:1008px;top:678.700px;font-size:14px">раздел "Параметры".</div>
<div class="abs" style="left:202px;top:705px;width:335px;height:23px;background:#23d959;border-radius:7px 0 0 0"></div>
<div class="abs" style="left:537px;top:705px;width:267px;height:23px;background:#df2828;border-radius:0 7px 0 0"></div>
<svg class="abs" style="left:213px;top:710px" width="13" height="13" viewBox="0 0 13 13"><path d="M5.500 1L1 6h3c0 3 1.500 5 6 5.500C8 10 7.500 8.500 7.500 6H10z" fill="#17402a"/></svg>
<div class="abs" id="sharetxt" style="left:260px;top:709.800px;font-size:11.8px;font-weight:bold;color:#1b2a33;white-space:nowrap;letter-spacing:-0.1px">Вы запустили демонстрацию экрана</div>
<svg class="abs" style="left:513px;top:710px" width="12" height="13" viewBox="0 0 12 13"><path d="M6 .5l5 2v4c0 3-2 5-5 6-3-1-5-3-5-6v-4z" fill="#17402a"/><path d="M3.500 6.500l2 2 3.300-3.500" stroke="#23d959" stroke-width="1.300" fill="none"/></svg>
<div class="abs" style="left:545px;top:711px;width:7px;height:7px;background:#fff;border-radius:1px"></div>
<div class="abs" id="stoptxt" style="left:565px;top:709.800px;font-size:11px;font-weight:bold;color:#fff;white-space:nowrap;letter-spacing:-0.17px">Остановить совместное использование</div>
<div id="taskbar" class="abs"></div>
<div class="abs" style="left:8px;top:727px;width:989px;height:1px;background:#555"></div>
<div class="abs" style="left:344px;top:727px;width:48px;height:41px;background:rgba(255,255,255,.55)"></div>
<div class="abs" style="left:103px;top:766px;width:40px;height:2px;background:#3b84cc"></div>
<div class="abs" style="left:135px;top:766px;width:8px;height:2px;background:#8fb6dd"></div>
<div class="abs" style="left:152px;top:766px;width:40px;height:2px;background:#3b84cc"></div>
<div class="abs" style="left:201px;top:766px;width:39px;height:2px;background:#3b84cc"></div>
<div class="abs" style="left:232px;top:766px;width:8px;height:2px;background:#8fb6dd"></div>
<div class="abs" style="left:250px;top:766px;width:40px;height:2px;background:#3b84cc"></div>
<div class="abs" style="left:298px;top:766px;width:40px;height:2px;background:#3b84cc"></div>
<div class="abs" style="left:344px;top:766px;width:48px;height:2px;background:#3b84cc"></div>
<div class="abs" style="left:397px;top:766px;width:40px;height:2px;background:#3b84cc"></div>
<svg class="abs" style="left:16.0px;top:740.0px;" width="16" height="16" viewBox="0 0 16 16"><path d="M0 2.300l6.500-.9v6.100H0zM7.500 1.300L16 0v7.500H7.500zM0 8.500h6.500v6.100L0 13.700zM7.500 8.500H16V16l-8.500-1.200z" fill="#111"/></svg>
<svg class="abs" style="left:63.0px;top:739.0px;" width="18" height="18" viewBox="0 0 18 18"><circle cx="11" cy="7" r="5.300" fill="none" stroke="#111" stroke-width="1.500"/><path d="M7.200 11L1.500 17" stroke="#111" stroke-width="1.600" stroke-linecap="round"/></svg>
<svg class="abs" style="left:110.5px;top:737.0px;" width="24" height="22" viewBox="0 0 24 22"><path d="M1 3.500a1 1 0 0 1 1-1h6l2 2h11a1 1 0 0 1 1 1V7H1z" fill="#e9a81c"/><rect x="1" y="6" width="22" height="12" rx="1" fill="#ffd45c"/><rect x="1" y="6" width="22" height="3" fill="#ffc83a"/><path d="M6.500 12h11v8h-3v-3.500h-5V20h-3z" fill="#2f86d6"/></svg>
<svg class="abs" style="left:160.5px;top:737.0px;" width="22" height="22" viewBox="0 0 22 22"><ellipse cx="11" cy="11" rx="10.500" ry="10.500" fill="#e0141f"/><ellipse cx="11" cy="11" rx="4.300" ry="7.300" fill="#ece8df"/></svg>
<svg class="abs" style="left:208.5px;top:736.0px;" width="24" height="24" viewBox="0 0 24 24"><circle cx="12" cy="12" r="11.500" fill="#1e6bf0"/><text x="12" y="14.200" font-size="6.500" font-weight="bold" fill="#fff" text-anchor="middle" font-family="Liberation Sans">zoom</text></svg>
<svg class="abs" style="left:257.5px;top:737.0px;" width="24" height="22" viewBox="0 0 24 22"><rect x="7" y="1" width="16" height="20" rx="1.200" fill="#21a366"/><rect x="15" y="1" width="8" height="5" fill="#33c481"/><rect x="7" y="6" width="8" height="5" fill="#107c41"/><rect x="15" y="6" width="8" height="5" fill="#21a366"/><rect x="7" y="11" width="16" height="10" fill="#185c37"/><rect x="15" y="11" width="8" height="5" fill="#107c41"/><rect x="1" y="5" width="12" height="12" rx="1.200" fill="#107c41"/><path d="M4.500 8l5 6M9.500 8l-5 6" stroke="#fff" stroke-width="1.700"/></svg>
<svg class="abs" style="left:306.0px;top:736.0px;" width="24" height="24" viewBox="0 0 24 24"><rect x="1" y="2" width="18" height="18" fill="#b9cfe4" stroke="#8fa9c4" stroke-width=".8"/><rect x="4" y="4" width="18" height="18" fill="#d6e4f1" stroke="#9fb7cf" stroke-width=".8"/><circle cx="10.500" cy="12" r="6.300" fill="#f28a1d"/><circle cx="10.500" cy="12" r="6.300" fill="none" stroke="#fbd9a8" stroke-width=".8"/><path d="M8.500 8.500v7l6-3.500z" fill="#fff"/></svg>
<svg class="abs" style="left:356.0px;top:736.0px;" width="24" height="24" viewBox="0 0 24 24"><defs><linearGradient id="eg1" x1="0" y1="0" x2="1" y2="1"><stop offset="0" stop-color="#35c1f1"/><stop offset=".5" stop-color="#1b9de2"/><stop offset="1" stop-color="#0c59a4"/></linearGradient><linearGradient id="eg2" x1="0" y1="0" x2="1" y2="0"><stop offset="0" stop-color="#2fc26e"/><stop offset="1" stop-color="#35c1f1"/></linearGradient></defs><circle cx="12" cy="12" r="11.500" fill="url(#eg1)"/><path d="M.8 10C2 4 6.500 .5 12 .5c6 0 11 4 11.500 10-1.500-3.500-5-5.500-9-5.500C8 5 3 8 .8 10z" fill="url(#eg2)"/><path d="M8.500 13.500c0-2.500 2-4.500 5-4.500 4 0 9 2.500 9.500 5.500-1 3-3 4-5.500 4s-5-1-5-3.500c0-.5.100-1 .4-1.500z" fill="#f3f3f3"/><path d="M4 13c0 5 4 9.500 9.500 10.200C9 22 7.500 18 8.500 13.500z" fill="#0c59a4" opacity=".7"/></svg>
<svg class="abs" style="left:405.0px;top:737.0px;" width="24" height="22" viewBox="0 0 24 22"><rect x="7" y="1" width="16" height="20" rx="1.200" fill="#41a5ee"/><rect x="7" y="6" width="16" height="5" fill="#2b7cd3"/><rect x="7" y="11" width="16" height="5" fill="#185abd"/><rect x="7" y="16" width="16" height="5" fill="#103f91"/><rect x="1" y="5" width="12" height="12" rx="1.200" fill="#185abd"/><path d="M3.500 8l1.500 6 2-5.500 2 5.500 1.500-6" stroke="#fff" stroke-width="1.300" fill="none"/></svg>
<svg class="abs" style="left:950.5px;top:740.5px;" width="25" height="16" viewBox="0 0 25 16"><defs><linearGradient id="cl" x1="0" y1="0" x2="0" y2="1"><stop offset="0" stop-color="#cfe2fb"/><stop offset="1" stop-color="#8fb8ee"/></linearGradient></defs><path d="M6.500 15a4.500 4.500 0 0 1-.5-9 6.500 6.500 0 0 1 12.300-1 4.800 4.800 0 0 1 1 9.500 3 3 0 0 1-1 .5z" fill="url(#cl)"/></svg>
<div class="abs tray" style="left:983px;top:740px;font-size:14px">2°C</div>
<div class="abs tray" id="cloudy" style="left:1013px;top:740px;font-size:14px">Cloudy</div>
<svg class="abs" style="left:1071.0px;top:740.0px;" width="16" height="16" viewBox="0 0 16 16"><path d="M3 10l5-5 5 5" stroke="#1a1a1a" stroke-width="1.1" fill="none" stroke-width="1.300"/></svg>
<svg class="abs" style="left:1095.5px;top:738.0px;" width="16" height="20" viewBox="0 0 16 20"><rect x="4" y="1" width="6" height="4" stroke="#1a1a1a" stroke-width="1.1" fill="none"/><rect x="2.500" y="5" width="9" height="12" rx="1.200" stroke="#1a1a1a" stroke-width="1.1" fill="none"/><path d="M9 15.500l2 2 3.500-4" stroke="#1a1a1a" stroke-width="1.1" fill="none"/></svg>
<svg class="abs" style="left:1117.0px;top:739.0px;" width="20" height="18" viewBox="0 0 20 18"><rect x="6.500" y="5.500" width="11" height="8" stroke="#1a1a1a" stroke-width="1.1" fill="none"/><rect x="8" y="7" width="8" height="5" fill="#1a1a1a"/><path d="M17.500 8h1.500v3h-1.500" stroke="#1a1a1a" stroke-width="1.1" fill="none"/><path d="M1 5v2M4 5v2M0 7h5v2.500l-2 1.500v2.500h5" stroke="#1a1a1a" stroke-width="1.1" fill="none"/></svg>
<svg class="abs" style="left:1143.0px;top:738.0px;" width="16" height="20" viewBox="0 0 16 20"><rect x="5" y="1" width="6" height="11" rx="3" fill="#1a1a1a"/><path d="M2.500 8.500a5.500 5.500 0 0 0 11 0M8 14v3.500M5 17.500h6" stroke="#1a1a1a" stroke-width="1.1" fill="none" stroke-width="1.300"/></svg>
<svg class="abs" style="left:1167.0px;top:740.0px;" width="18" height="18" viewBox="0 0 18 18"><path d="M3 16A13 13 0 0 1 16 3" stroke="#1a1a1a" stroke-width="1.1" fill="none" stroke-width="1.300"/><path d="M6.500 16A9.500 9.500 0 0 1 16 6.500" stroke="#1a1a1a" stroke-width="1.1" fill="none" stroke-width="1.300"/><path d="M10 16A6 6 0 0 1 16 10" stroke="#1a1a1a" stroke-width="1.1" fill="none" stroke-width="1.300"/><circle cx="14.500" cy="14.500" r="1.600" fill="#1a1a1a"/></svg>
<svg class="abs" style="left:1189.0px;top:739.0px;" width="20" height="18" viewBox="0 0 20 18"><path d="M1.500 6.500h3l4-3.500v12l-4-3.500h-3z" stroke="#1a1a1a" stroke-width="1.1" fill="none"/><path d="M11 6.500a3.500 3.500 0 0 1 0 5M13.500 4.500a6.500 6.500 0 0 1 0 9M16 2.800a9.500 9.500 0 0 1 0 12.400" stroke="#1a1a1a" stroke-width="1.1" fill="none"/></svg>
<div class="abs tray" style="left:1218px;top:741px;font-size:11.3px">УКР</div>
<div class="abs tray" id="clock" style="left:1267px;top:732px;font-size:11.5px;letter-spacing:-.4px">16:05</div>
<div class="abs tray" id="date" style="left:1253px;top:750px;font-size:11.5px;letter-spacing:-.4px">27.02.2023</div>
<svg class="abs" style="left:1323.0px;top:738.0px;" width="20" height="20" viewBox="0 0 20 20"><path d="M2.500 3.500h15v11h-5.500l-2.500 2.500-2.500-2.500H2.500z" stroke="#1a1a1a" stroke-width="1.1" fill="none" stroke-width="1.200"/></svg>
<div class="abs" style="left:1361px;top:727px;width:1px;height:41px;background:#9a9890"></div>
<div id="zoom" class="abs"></div>
<svg class="abs" style="left:0;top:28px" width="175" height="126" viewBox="0 28 175 126">
<defs>
<linearGradient id="vbg" x1="0" y1="0" x2="175" y2="0" gradientUnits="userSpaceOnUse">
<stop offset="0" stop-color="#c9c39a"/><stop offset=".38" stop-color="#c9c59e"/><stop offset=".52" stop-color="#c4c6ab"/><stop offset=".64" stop-color="#c9cdc1"/><stop offset=".76" stop-color="#d0d5cf"/><stop offset=".86" stop-color="#dadedb"/><stop offset=".94" stop-color="#e6e7ec"/><stop offset="1" stop-color="#d9dadd"/>
</linearGradient>
<linearGradient id="lr" x1="0" y1="40" x2="0" y2="154" gradientUnits="userSpaceOnUse"><stop offset="0" stop-color="#dccfc8"/><stop offset=".55" stop-color="#d9c6bf"/><stop offset="1" stop-color="#cfb3ab"/></linearGradient><filter id="vf2" x="-20%" y="-20%" width="140%" height="140%"><feGaussianBlur stdDeviation="2"/></filter>
<filter id="vf4" x="-30%" y="-30%" width="160%" height="160%"><feGaussianBlur stdDeviation="4"/></filter>
<filter id="vf1" x="-20%" y="-20%" width="140%" height="140%"><feGaussianBlur stdDeviation="1"/></filter>
</defs>
<rect x="0" y="28" width="175" height="126" fill="url(#vbg)"/>
<ellipse cx="161" cy="96" rx="8" ry="22" fill="#f6f2fc" filter="url(#vf4)"/>
<rect x="118" y="28" width="14" height="126" fill="#c2c8bd" opacity=".5" filter="url(#vf4)"/>
<path d="M46 154L57 113 80 121 101 135 128 154z" fill="#a68081" filter="url(#vf1)"/>
<path d="M70 126l14 28h-8z" fill="#926c6d" opacity=".5" filter="url(#vf1)"/>
<path d="M-4 28L50 28 66 31 72 46 71 64 66 84 60 100 57 92 60 64 54 46 40 38 16 36-4 40z" fill="#a98a63" filter="url(#vf1)"/>
<path d="M-4 38C18 34 44 35 54 50 61 68 60 94 57 110 54 128 47 142 38 154L-4 154z" fill="url(#lr)" filter="url(#vf1)"/>
<ellipse cx="24" cy="133" rx="13" ry="4.500" fill="#cda4a2" opacity=".65" filter="url(#vf2)"/>
<ellipse cx="24" cy="104" rx="8" ry="10" fill="#cdb0a8" opacity=".4" filter="url(#vf2)"/>
<ellipse cx="30" cy="60" rx="16" ry="12" fill="#e6dbd6" opacity=".7" filter="url(#vf4)"/>
<path d="M0 69q10-4 19 2M39 71q9-6 19-3" stroke="#7c6656" stroke-width="1.500" fill="none" filter="url(#vf1)" opacity=".8"/>
<path d="M1 85h16M41 83h15" stroke="#8f8474" stroke-width="2" fill="none" filter="url(#vf1)" opacity=".6"/>
<rect x="0" y="135" width="69" height="19" fill="#3a3838" opacity=".82"/>
</svg>
<div class="abs zl" style="left:3px;top:137px">Lavrinenko</div>
<div class="abs" style="left:-2px;top:154px;width:178px;height:129px;border:1.500px solid #8bc220;background:#222"></div>
<div class="abs zn" id="zn1" style="left:0;top:211px;letter-spacing:.1px">Уманець&nbsp; Богда...</div>
<div class="abs" style="left:0;top:262px;width:120px;height:19px;background:#333"></div>
<div class="abs zl" id="zl2" style="left:0;top:265px">нець Богдан 8 класс</div>
<div class="abs zn" id="zn2" style="left:10px;top:339px">Буртова Аліна</div>
<div class="abs" style="left:0;top:390px;width:61px;height:20px;background:#333"></div>
<div class="abs zl" id="zl3" style="left:0;top:393px">ова Аліна</div>
</body></html>
